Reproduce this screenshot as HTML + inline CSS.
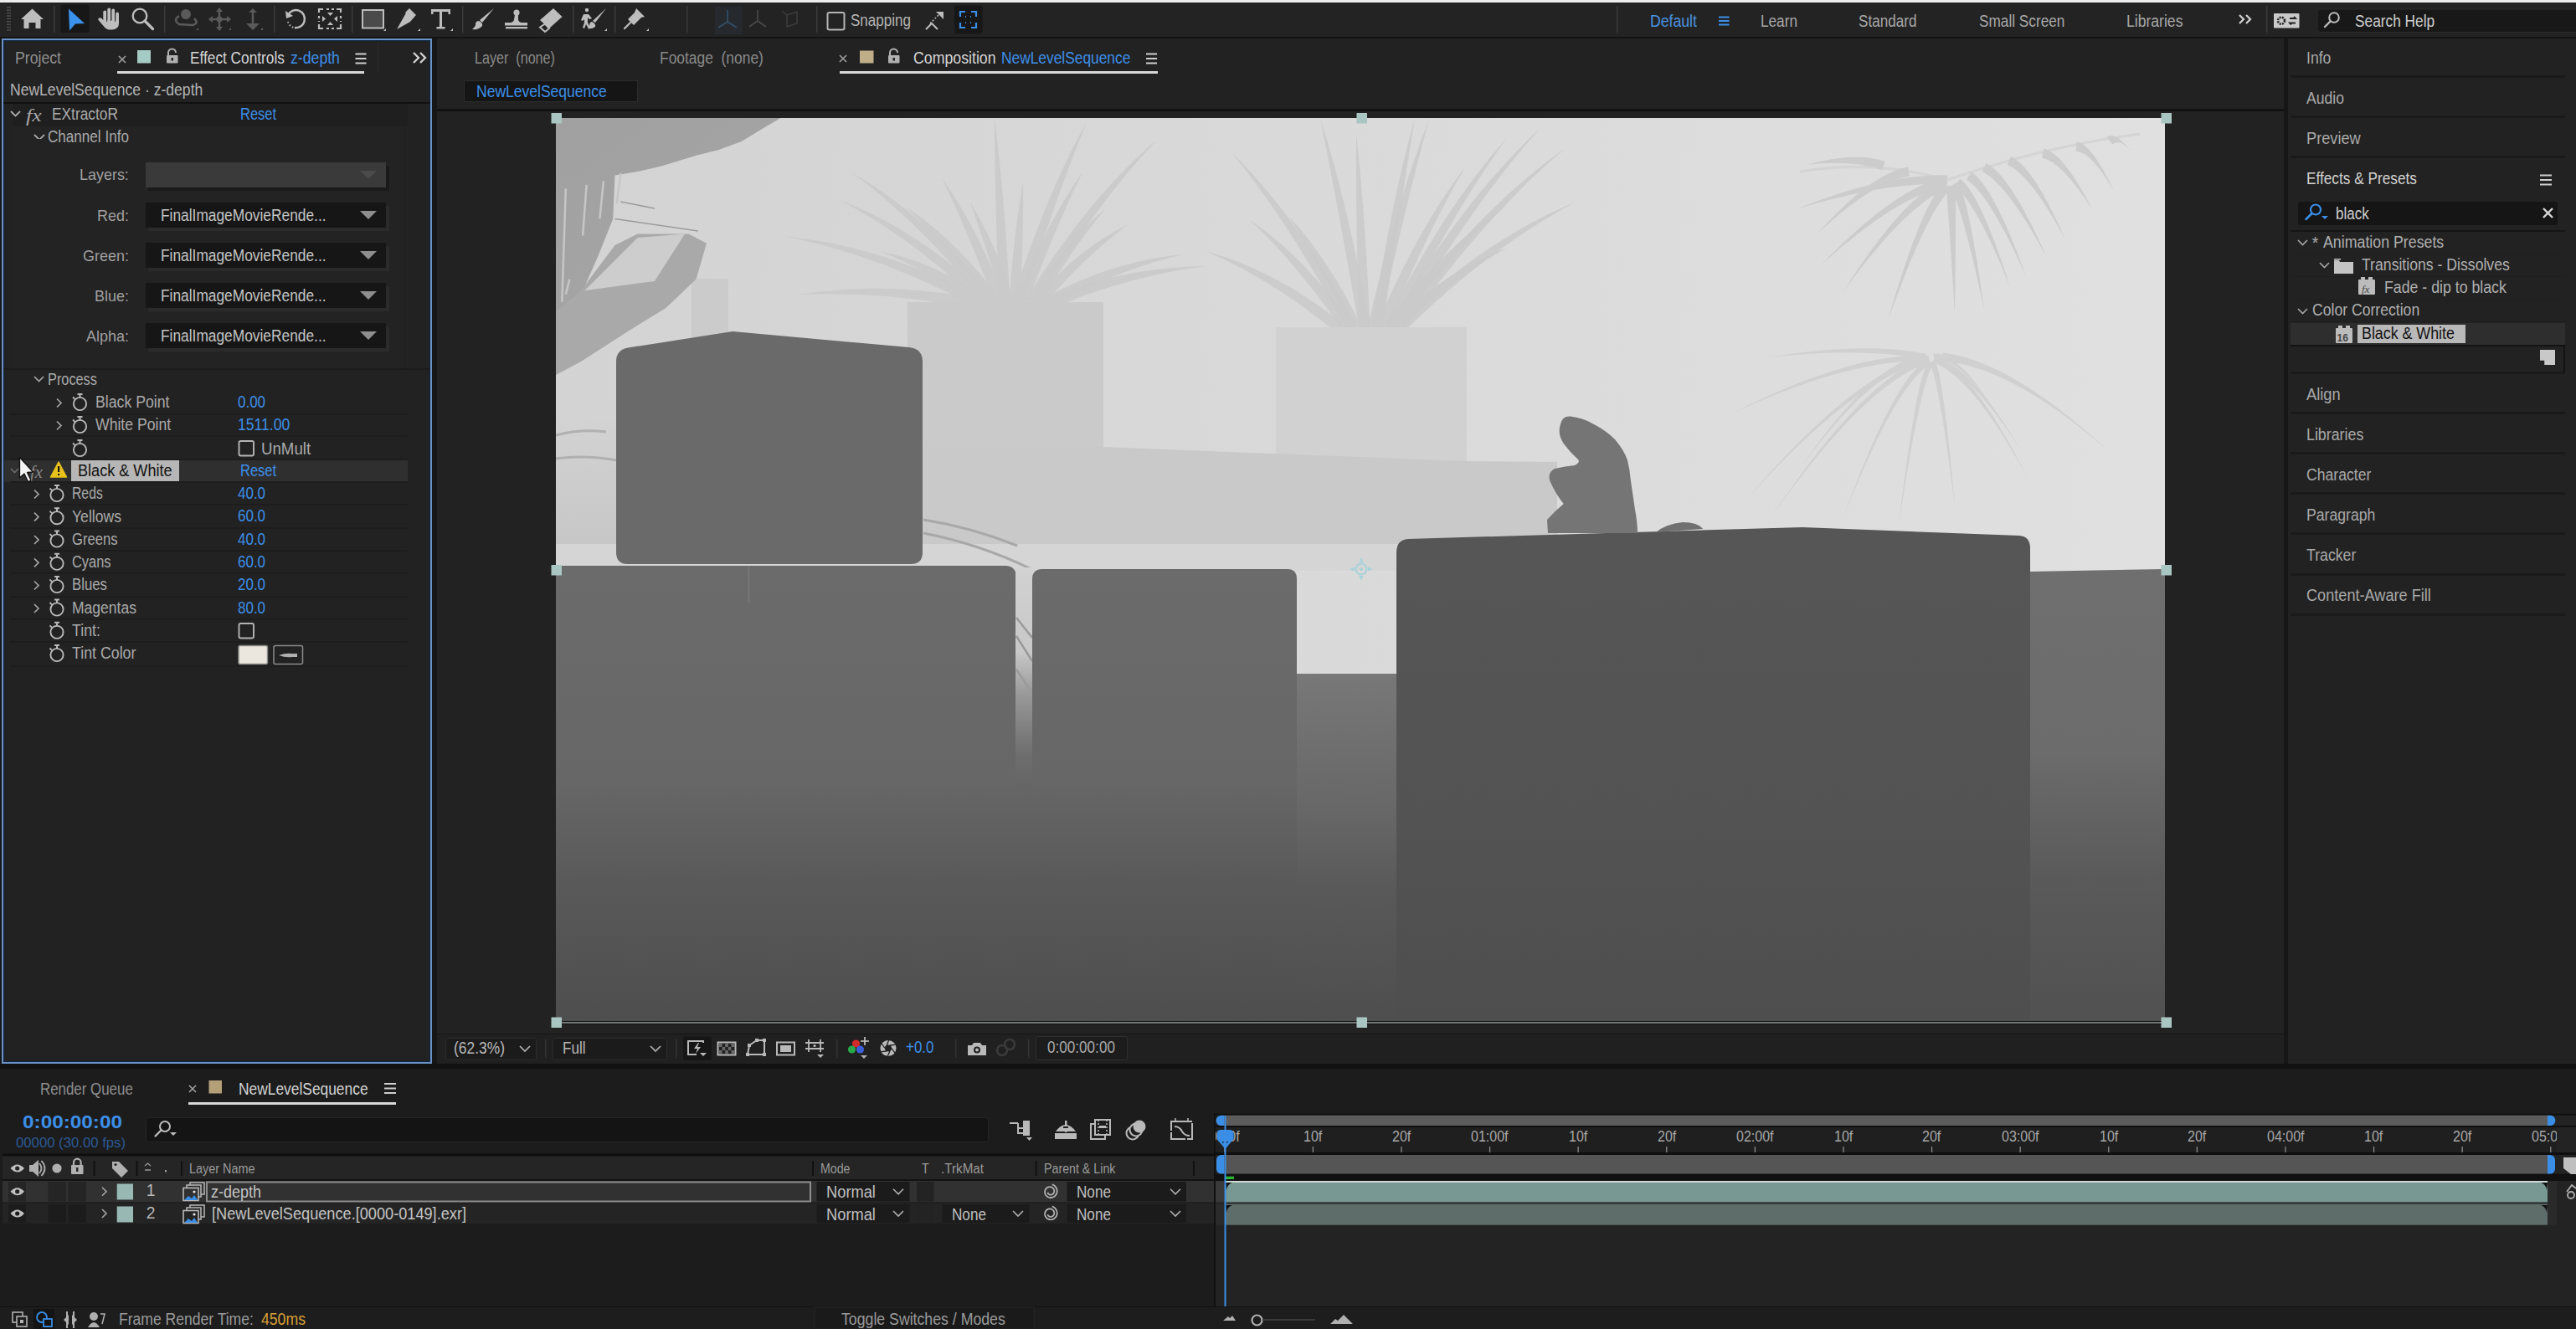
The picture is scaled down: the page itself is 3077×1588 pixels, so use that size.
<!DOCTYPE html>
<html><head><meta charset="utf-8">
<style>
*{margin:0;padding:0;box-sizing:border-box}
html,body{width:3077px;height:1588px;overflow:hidden;background:#121212;font-family:"Liberation Sans",sans-serif;color:#a8a8a8}
.a{position:absolute}
.t{position:absolute;white-space:nowrap;line-height:1}
svg{position:absolute;overflow:hidden}
</style></head><body>
<div class="a" style="left:0px;top:0px;width:3077px;height:3px;background:#ededed;"></div>
<div class="a" style="left:0px;top:3px;width:3077px;height:41px;background:#232323;"></div>
<div class="a" style="left:0px;top:44px;width:3077px;height:2px;background:#131313;"></div>
<svg style="left:0px;top:3px;" width="3077" height="41" viewBox="0 3 3077 41"><rect x="8" y="8.0" width="5" height="1.6" fill="#4a4a4a"/><rect x="8" y="11.4" width="5" height="1.6" fill="#4a4a4a"/><rect x="8" y="14.8" width="5" height="1.6" fill="#4a4a4a"/><rect x="8" y="18.2" width="5" height="1.6" fill="#4a4a4a"/><rect x="8" y="21.6" width="5" height="1.6" fill="#4a4a4a"/><rect x="8" y="25.0" width="5" height="1.6" fill="#4a4a4a"/><rect x="8" y="28.4" width="5" height="1.6" fill="#4a4a4a"/><rect x="8" y="31.8" width="5" height="1.6" fill="#4a4a4a"/><rect x="8" y="35.2" width="5" height="1.6" fill="#4a4a4a"/><rect x="64" y="7" width="1.5" height="32" fill="#3a3a3a"/><rect x="196" y="7" width="1.5" height="32" fill="#3a3a3a"/><rect x="327" y="7" width="1.5" height="32" fill="#3a3a3a"/><rect x="420" y="7" width="1.5" height="32" fill="#3a3a3a"/><rect x="552" y="7" width="1.5" height="32" fill="#3a3a3a"/><rect x="684" y="7" width="1.5" height="32" fill="#3a3a3a"/><rect x="734" y="7" width="1.5" height="32" fill="#3a3a3a"/><rect x="820" y="7" width="1.5" height="32" fill="#3a3a3a"/><rect x="975" y="7" width="1.5" height="32" fill="#3a3a3a"/><rect x="1931" y="7" width="1.5" height="32" fill="#3a3a3a"/><rect x="2707" y="7" width="1.5" height="32" fill="#3a3a3a"/><path d="M38.5,10.5 L52,23 L48.5,23 L48.5,34 L42.5,34 L42.5,27 L34.5,27 L34.5,34 L28.5,34 L28.5,23 L25,23 Z" fill="#bdbdbd"/><rect x="72.5" y="5.5" width="34" height="33.5" rx="3" fill="#171717"/><path d="M82,10.5 L101,28 L90,28.5 L83,36.5 Z" fill="#3a92ec"/><g fill="#bdbdbd"><rect x="123.3" y="12.5" width="4" height="15" rx="2"/><rect x="128.3" y="9.5" width="4" height="17" rx="2"/><rect x="133.3" y="10.5" width="4" height="16" rx="2"/><rect x="138.2" y="14.5" width="3.8" height="13" rx="1.9"/><path d="M123,24 h19 v4 q0,7 -8,7.5 h-3 q-4,0 -7,-4 l-6,-7 q-1.5,-2 0.5,-3 q1.5,-0.8 3,0.5z"/></g><path d="M127.6,14 v12 M132.6,11 v14 M137.5,12 v14" stroke="#232323" stroke-width="0.9"/><circle cx="167" cy="19" r="8.3" fill="none" stroke="#bdbdbd" stroke-width="2.3"/><path d="M173,25 L182.5,34.5" stroke="#bdbdbd" stroke-width="3.2" stroke-linecap="round"/><circle cx="222" cy="17" r="6" fill="#5a5a5a"/><path d="M214,19 Q206,24 214,29 L230,30 Q238,28 232,22" fill="none" stroke="#5a5a5a" stroke-width="2.5"/><path d="M234,36 l3,-3 v3z" fill="#5a5a5a"/><path d="M262,11 v24 M250,23 h25" stroke="#5a5a5a" stroke-width="2.5"/><path d="M262,9 l-4,5 h8z M262,37 l-4,-5 h8z M249,23 l5,-4 v8z M276,23 l-5,-4 v8z" fill="#5a5a5a"/><circle cx="262" cy="23" r="3.5" fill="#5a5a5a"/><path d="M273,36 l3,-3 v3z" fill="#5a5a5a"/><path d="M302,13 v18" stroke="#5a5a5a" stroke-width="2.5"/><path d="M302,10 l-5,5 h10z M294,28 h16 l-8,8z" fill="#5a5a5a"/><path d="M311,36 l3,-3 v3z" fill="#5a5a5a"/><path d="M344,18 A10.5,10.5 0 1 1 352,33" fill="none" stroke="#bdbdbd" stroke-width="2.4" stroke-dasharray="40 0"/><path d="M341,13 L342,22 L350,19 Z" fill="#bdbdbd"/><path d="M344,26 A10.5,10.5 0 0 0 354,33.5" fill="none" stroke="#bdbdbd" stroke-width="2" stroke-dasharray="1.5 2.5"/><path d="M381,15 v-4 h5 M402,11 h5 v4 M407,29 v5 h-5 M386,34 h-5 v-5" fill="none" stroke="#bdbdbd" stroke-width="2.2"/><path d="M390,11 h9 M390,34 h9 M381,19 v7 M407,19 v7" stroke="#bdbdbd" stroke-width="2.2" stroke-dasharray="3 3"/><path d="M391,15 h7 l-3.5,4z M391,30 h7 l-3.5,-4z M385,19 v7 l4,-3.5z M403,19 v7 l-4,-3.5z" fill="#bdbdbd"/><rect x="433" y="12" width="25" height="21.5" fill="#4a4a4a" stroke="#bdbdbd" stroke-width="2"/><path d="M458,37 l3,-3 v3z" fill="#bdbdbd"/><path d="M487,12 L495,20 L490,26 L474,35 L483,19 Z" fill="#bdbdbd"/><path d="M484,15 L489,10 L497,18 L492,23 Z" fill="#bdbdbd"/><path d="M499,37 l3,-3 v3z" fill="#bdbdbd"/><path d="M515,11 h23 v6 h-2.5 v-3 h-7.5 v18 h3.5 v2.5 h-10 v-2.5 h3.5 v-18 h-7.5 v3 h-2.5z" fill="#bdbdbd"/><path d="M538,37 l3,-3 v3z" fill="#bdbdbd"/><path d="M590,10 L576,27 L573,24 Z" fill="#bdbdbd"/><path d="M572,25 Q577,27 576,31 Q572,36 564,35 Q569,31 568,28 Q569,25 572,25Z" fill="#bdbdbd"/><circle cx="617" cy="15" r="3.6" fill="#bdbdbd"/><path d="M615,18 h4 v5 q0,3 4,4 h7 v3.5 h-27 v-3.5 h7 q4,-1 4,-4z" fill="#bdbdbd"/><rect x="604" y="32" width="26" height="2.3" fill="#bdbdbd"/><path d="M661,10 L671.5,20 L656,34 L645,24 Z" fill="#bdbdbd"/><path d="M651,28.5 L656,34 L651,38 L645,32.5 Z" fill="none" stroke="#bdbdbd" stroke-width="2"/><circle cx="701" cy="12" r="2.2" fill="#bdbdbd"/><path d="M697,17 l6,0 l4,5 l-3,1 l-2,-2 l0,6 l3,6 l-2,1 l-3,-5 l-2,5 l-2,-1 l2,-6 v-4 l-2,2 l-2,-1z" fill="#bdbdbd"/><path d="M724,10 L711,27 L708,25 Z" fill="#bdbdbd"/><path d="M707,26 Q712,28 711,32 Q707,35 702,34 Q705,31 704,29 Q705,26 707,26Z" fill="#bdbdbd"/><path d="M722,37 l3,-3 v3z" fill="#bdbdbd"/><path d="M760,10 L770,20 L766,21 L760,27 L757,30 L750,23 L753,20 L758,15 Z" fill="#bdbdbd"/><path d="M753,27 L746,34" stroke="#bdbdbd" stroke-width="2.3" stroke-linecap="round"/><path d="M772,37 l3,-3 v3z" fill="#bdbdbd"/><rect x="854" y="8" width="32.5" height="33" fill="#262a2e"/><path d="M869,12 v14 l-11,7 M869,26 l11,7" fill="none" stroke="#34506a" stroke-width="1.6"/><path d="M905,12 v13 l-10,7 M905,25 l10,7" fill="none" stroke="#4a4a4a" stroke-width="1.6"/><path d="M940,18 l12,-4 v14 l-12,4z M934,13 l6,5" fill="none" stroke="#3c3c3c" stroke-width="1.6"/><rect x="988.5" y="15" width="20" height="20.5" rx="2" fill="none" stroke="#b5b5b5" stroke-width="2"/><path d="M1106,35 l7,-7 l7,7" fill="none" stroke="#bdbdbd" stroke-width="2"/><path d="M1111,28 l11,-11" stroke="#bdbdbd" stroke-width="1.5" stroke-dasharray="2 2"/><path d="M1127,14 v9 l-9,-9z" fill="#bdbdbd"/><rect x="1140" y="6.5" width="33.5" height="34" rx="3" fill="#171717"/><path d="M1147,20 v-6 h6 M1160,14 h6 v6 M1166,27 v6 h-6 M1153,33 h-6 v-6" fill="none" stroke="#3a8ee6" stroke-width="2.2"/><path d="M1153,20 h1 M1159,20 h1 M1153,27 h1 M1159,27 h1" stroke="#3a8ee6" stroke-width="2"/><path d="M2053,20.5 h12.5 M2053,25 h12.5 M2053,29.5 h12.5" stroke="#3d8fe8" stroke-width="2"/><path d="M2675,18 l5,5 l-5,5 M2683,18 l5,5 l-5,5" fill="none" stroke="#cfcfcf" stroke-width="2.3"/><rect x="2716" y="16" width="30.5" height="17.5" rx="1" fill="#c9c9c9"/><circle cx="2725" cy="24.7" r="4" fill="none" stroke="#232323" stroke-width="2.6" stroke-dasharray="2 1.2"/><path d="M2735,22 h7 l-2,-2 M2742,27.5 h-7 l2,2" fill="none" stroke="#232323" stroke-width="1.8"/><rect x="2768" y="11" width="320" height="27.5" rx="3" fill="#181818" stroke="#2c2c2c" stroke-width="1"/><circle cx="2788" cy="21" r="5.8" fill="none" stroke="#bdbdbd" stroke-width="2"/><path d="M2783.5,25.5 L2777,32" stroke="#bdbdbd" stroke-width="2.4" stroke-linecap="round"/></svg>
<div class="t" style="left:1016px;top:15.46px;font-size:19.3px;color:#b3b3b3;transform:scaleX(0.8827);transform-origin:0 0;">Snapping</div>
<div class="t" style="left:1971px;top:16.46px;font-size:19.3px;color:#4a93e0;transform:scaleX(0.9157);transform-origin:0 0;">Default</div>
<div class="t" style="left:2103px;top:16.46px;font-size:19.3px;color:#a8a8a8;transform:scaleX(0.8913);transform-origin:0 0;">Learn</div>
<div class="t" style="left:2220px;top:16.46px;font-size:19.3px;color:#a8a8a8;transform:scaleX(0.8872);transform-origin:0 0;">Standard</div>
<div class="t" style="left:2363.5px;top:16.46px;font-size:19.3px;color:#a8a8a8;transform:scaleX(0.8930);transform-origin:0 0;">Small Screen</div>
<div class="t" style="left:2540px;top:16.46px;font-size:19.3px;color:#a8a8a8;transform:scaleX(0.9119);transform-origin:0 0;">Libraries</div>
<div class="t" style="left:2812.5px;top:15.96px;font-size:19.3px;color:#cfcfcf;transform:scaleX(0.8963);transform-origin:0 0;">Search Help</div>
<div class="a" style="left:0px;top:46px;width:522px;height:1231px;background:#161616;"></div>
<div class="a" style="left:2px;top:46px;width:514px;height:1225px;background:#222222;border:2px solid #6a92c4;box-shadow:inset 0 0 1px 1px #0e2747;"></div>
<div class="t" style="left:18px;top:60.46px;font-size:19.3px;color:#8f8f8f;transform:scaleX(0.9156);transform-origin:0 0;">Project</div>
<div class="a" style="left:4px;top:122px;width:510px;height:2px;background:#111111;"></div>
<div class="a" style="left:16px;top:124px;width:471px;height:27px;background:#1f1f1f;"></div>
<div class="a" style="left:16px;top:151px;width:471px;height:290px;background:#232323;"></div>
<div class="a" style="left:483px;top:151px;width:1px;height:290px;background:#1e1e1e;"></div>
<svg style="left:0px;top:46px;" width="522" height="120" viewBox="0 46 522 120"><path d="M142,67 l8,8 M150,67 l-8,8" stroke="#a0a0a0" stroke-width="1.6"/><rect x="164" y="60" width="16" height="15.5" fill="#a6cbc4"/><path d="M201,66 v-3 a4.5,4.5 0 0 1 9,0" fill="none" stroke="#b0b0b0" stroke-width="2"/><rect x="199" y="66" width="13.5" height="9.5" rx="1" fill="#b0b0b0"/><rect x="204.5" y="69" width="2.5" height="3.5" fill="#232323"/><path d="M424.5,64.5 h13 M424.5,70 h13 M424.5,75.5 h13" stroke="#cfcfcf" stroke-width="2"/><path d="M494,63 l6,6 l-6,6 M502,63 l6,6 l-6,6" fill="none" stroke="#d0d0d0" stroke-width="2.4"/><path d="M13,133 l5.5,5.5 l5.5,-5.5" fill="none" stroke="#a9a9a9" stroke-width="1.8"/><path d="M41,161 l6,6 l6,-6" fill="none" stroke="#a9a9a9" stroke-width="1.8"/></svg>
<div class="t" style="left:227px;top:60.46px;font-size:19.3px;color:#d6d6d6;transform:scaleX(0.8952);transform-origin:0 0;">Effect Controls</div>
<div class="t" style="left:347px;top:60.46px;font-size:19.3px;color:#3d8fe8;transform:scaleX(0.9165);transform-origin:0 0;">z-depth</div>
<div class="a" style="left:140px;top:85px;width:295px;height:3px;background:#d8d8d8;"></div>
<div class="a" style="left:451px;top:50px;width:1px;height:35px;background:#2c2c2c;"></div>
<div class="t" style="left:12px;top:98.46px;font-size:19.3px;color:#b4b4b4;transform:scaleX(0.9103);transform-origin:0 0;">NewLevelSequence · z-depth</div>
<div class="t" style="left:31px;top:128.02px;font-size:21px;color:#a8a8a8;transform:scaleX(1.2244);transform-origin:0 0;font-family:'Liberation Serif',serif;font-style:italic;">fx</div>
<div class="t" style="left:62px;top:127.46px;font-size:19.3px;color:#aaaaaa;transform:scaleX(0.8982);transform-origin:0 0;">EXtractoR</div>
<div class="t" style="left:287px;top:127.46px;font-size:19.3px;color:#3d8fe8;transform:scaleX(0.8529);transform-origin:0 0;">Reset</div>
<div class="t" style="left:57px;top:154.46px;font-size:19.3px;color:#aaaaaa;transform:scaleX(0.8862);transform-origin:0 0;">Channel Info</div>
<div class="t" style="left:94.63849812499998px;top:200.44px;font-size:18.5px;color:#a0a0a0;transform:scaleX(0.9702);transform-origin:0 0;">Layers:</div>
<div class="a" style="left:177px;top:198px;width:288px;height:30px;background:#1a1a1a;"></div>
<div class="a" style="left:173.5px;top:194px;width:287.5px;height:30px;background:#3a3a3a;"></div>
<svg style="left:429px;top:203px;" width="22" height="12" viewBox="429 203 22 12"><path d="M430,204 h20 l-10,10z" fill="#4a4a4a"/></svg>
<div class="t" style="left:115.58554203125px;top:248.74px;font-size:18.5px;color:#a0a0a0;transform:scaleX(0.9702);transform-origin:0 0;">Red:</div>
<div class="a" style="left:177px;top:246px;width:288px;height:30px;background:#2b2b2b;"></div>
<div class="a" style="left:173.5px;top:242px;width:287.5px;height:30px;background:#161616;"></div>
<div class="t" style="left:192px;top:248.26px;font-size:19.3px;color:#c4c4c4;transform:scaleX(0.8990);transform-origin:0 0;">FinalImageMovieRende...</div>
<svg style="left:429px;top:251px;" width="22" height="12" viewBox="429 251 22 12"><path d="M430,252 h20 l-10,10z" fill="#8e8e8e"/></svg>
<div class="t" style="left:98.6265415625px;top:296.94px;font-size:18.5px;color:#a0a0a0;transform:scaleX(0.9702);transform-origin:0 0;">Green:</div>
<div class="a" style="left:177px;top:294px;width:288px;height:30px;background:#2b2b2b;"></div>
<div class="a" style="left:173.5px;top:290px;width:287.5px;height:30px;background:#161616;"></div>
<div class="t" style="left:192px;top:296.46px;font-size:19.3px;color:#c4c4c4;transform:scaleX(0.8990);transform-origin:0 0;">FinalImageMovieRende...</div>
<svg style="left:429px;top:299px;" width="22" height="12" viewBox="429 299 22 12"><path d="M430,300 h20 l-10,10z" fill="#8e8e8e"/></svg>
<div class="t" style="left:112.587498125px;top:344.94px;font-size:18.5px;color:#a0a0a0;transform:scaleX(0.9702);transform-origin:0 0;">Blue:</div>
<div class="a" style="left:177px;top:342px;width:288px;height:30px;background:#2b2b2b;"></div>
<div class="a" style="left:173.5px;top:338px;width:287.5px;height:30px;background:#161616;"></div>
<div class="t" style="left:192px;top:344.46px;font-size:19.3px;color:#c4c4c4;transform:scaleX(0.8990);transform-origin:0 0;">FinalImageMovieRende...</div>
<svg style="left:429px;top:347px;" width="22" height="12" viewBox="429 347 22 12"><path d="M430,348 h20 l-10,10z" fill="#8e8e8e"/></svg>
<div class="t" style="left:102.604769140625px;top:392.94px;font-size:18.5px;color:#a0a0a0;transform:scaleX(0.9702);transform-origin:0 0;">Alpha:</div>
<div class="a" style="left:177px;top:390px;width:288px;height:30px;background:#2b2b2b;"></div>
<div class="a" style="left:173.5px;top:386px;width:287.5px;height:30px;background:#161616;"></div>
<div class="t" style="left:192px;top:392.46px;font-size:19.3px;color:#c4c4c4;transform:scaleX(0.8990);transform-origin:0 0;">FinalImageMovieRende...</div>
<svg style="left:429px;top:395px;" width="22" height="12" viewBox="429 395 22 12"><path d="M430,396 h20 l-10,10z" fill="#8e8e8e"/></svg>
<div class="a" style="left:4px;top:440px;width:510px;height:2px;background:#1c1c1c;"></div>
<div class="t" style="left:57px;top:443.76px;font-size:19.3px;color:#aaaaaa;transform:scaleX(0.8462);transform-origin:0 0;">Process</div>
<div class="a" style="left:12px;top:494px;width:475px;height:2px;background:#1d1d1d;"></div>
<div class="t" style="left:113.8px;top:471.46px;font-size:19.3px;color:#aaaaaa;transform:scaleX(0.9177);transform-origin:0 0;">Black Point</div>
<div class="t" style="left:284.4px;top:471.26px;font-size:19.3px;color:#3d8fe8;transform:scaleX(0.8812);transform-origin:0 0;">0.00</div>
<div class="a" style="left:12px;top:520px;width:475px;height:2px;background:#1d1d1d;"></div>
<div class="t" style="left:113.8px;top:498.46px;font-size:19.3px;color:#aaaaaa;transform:scaleX(0.9140);transform-origin:0 0;">White Point</div>
<div class="t" style="left:284.4px;top:498.26px;font-size:19.3px;color:#3d8fe8;transform:scaleX(0.9117);transform-origin:0 0;">1511.00</div>
<div class="a" style="left:12px;top:548px;width:475px;height:2px;background:#1d1d1d;"></div>
<div class="t" style="left:311.5px;top:526.96px;font-size:19.3px;color:#aaaaaa;transform:scaleX(0.9684);transform-origin:0 0;">UnMult</div>
<div class="a" style="left:5px;top:549.5px;width:482px;height:26.5px;background:#2f2f2f;"></div>
<div class="a" style="left:85px;top:549.5px;width:129px;height:25.5px;background:#b6b6b6;"></div>
<div class="t" style="left:92.7px;top:552.76px;font-size:19.3px;color:#121212;transform:scaleX(0.9382);transform-origin:0 0;">Black &amp; White</div>
<div class="t" style="left:287px;top:553.46px;font-size:19.3px;color:#3d8fe8;transform:scaleX(0.8529);transform-origin:0 0;">Reset</div>
<div class="t" style="left:36px;top:553.87px;font-size:20px;color:#8a8a8a;transform:scaleX(1.0157);transform-origin:0 0;font-family:'Liberation Serif',serif;font-style:italic;">fx</div>
<div class="a" style="left:12px;top:575px;width:475px;height:2px;background:#1d1d1d;"></div>
<div class="t" style="left:284.4px;top:580.26px;font-size:19.3px;color:#3d8fe8;transform:scaleX(0.8812);transform-origin:0 0;">40.0</div>
<div class="t" style="left:86px;top:580.46px;font-size:19.3px;color:#aaaaaa;transform:scaleX(0.8168);transform-origin:0 0;">Reds</div>
<div class="a" style="left:12px;top:602px;width:475px;height:2px;background:#1d1d1d;"></div>
<div class="t" style="left:284.4px;top:607.46px;font-size:19.3px;color:#3d8fe8;transform:scaleX(0.8812);transform-origin:0 0;">60.0</div>
<div class="t" style="left:86px;top:607.66px;font-size:19.3px;color:#aaaaaa;transform:scaleX(0.9114);transform-origin:0 0;">Yellows</div>
<div class="a" style="left:12px;top:630px;width:475px;height:2px;background:#1d1d1d;"></div>
<div class="t" style="left:284.4px;top:634.76px;font-size:19.3px;color:#3d8fe8;transform:scaleX(0.8812);transform-origin:0 0;">40.0</div>
<div class="t" style="left:86px;top:634.96px;font-size:19.3px;color:#aaaaaa;transform:scaleX(0.8611);transform-origin:0 0;">Greens</div>
<div class="a" style="left:12px;top:657px;width:475px;height:2px;background:#1d1d1d;"></div>
<div class="t" style="left:284.4px;top:662.06px;font-size:19.3px;color:#3d8fe8;transform:scaleX(0.8812);transform-origin:0 0;">60.0</div>
<div class="t" style="left:86px;top:662.26px;font-size:19.3px;color:#aaaaaa;transform:scaleX(0.8500);transform-origin:0 0;">Cyans</div>
<div class="a" style="left:12px;top:684px;width:475px;height:2px;background:#1d1d1d;"></div>
<div class="t" style="left:284.4px;top:689.26px;font-size:19.3px;color:#3d8fe8;transform:scaleX(0.8812);transform-origin:0 0;">20.0</div>
<div class="t" style="left:86px;top:689.46px;font-size:19.3px;color:#aaaaaa;transform:scaleX(0.8699);transform-origin:0 0;">Blues</div>
<div class="a" style="left:12px;top:712px;width:475px;height:2px;background:#1d1d1d;"></div>
<div class="t" style="left:284.4px;top:716.76px;font-size:19.3px;color:#3d8fe8;transform:scaleX(0.8812);transform-origin:0 0;">80.0</div>
<div class="t" style="left:86px;top:716.96px;font-size:19.3px;color:#aaaaaa;transform:scaleX(0.9084);transform-origin:0 0;">Magentas</div>
<div class="a" style="left:12px;top:739px;width:475px;height:2px;background:#1d1d1d;"></div>
<div class="t" style="left:86px;top:744.26px;font-size:19.3px;color:#aaaaaa;transform:scaleX(0.9234);transform-origin:0 0;">Tint:</div>
<div class="a" style="left:12px;top:766px;width:475px;height:2px;background:#1d1d1d;"></div>
<div class="t" style="left:86px;top:771.46px;font-size:19.3px;color:#aaaaaa;transform:scaleX(0.9223);transform-origin:0 0;">Tint Color</div>
<div class="a" style="left:12px;top:795px;width:475px;height:2px;background:#1d1d1d;"></div>
<svg style="left:0px;top:430px;" width="522" height="380" viewBox="0 430 522 380"><path d="M41,450 l5.5,5.5 l5.5,-5.5" fill="none" stroke="#a5a5a5" stroke-width="1.7"/><circle cx="95.5" cy="482.5" r="7.6" fill="none" stroke="#b9b9b9" stroke-width="1.9"/><rect x="92.5" y="470.0" width="6" height="2" fill="#b9b9b9"/><rect x="94.5" y="471.5" width="2" height="3.5" fill="#b9b9b9"/><path d="M87.0,474.5 l2.6,2.6" stroke="#b9b9b9" stroke-width="1.8"/><path d="M68,476.5 l5,5 l-5,5" fill="none" stroke="#a5a5a5" stroke-width="1.7"/><circle cx="95.5" cy="509.5" r="7.6" fill="none" stroke="#b9b9b9" stroke-width="1.9"/><rect x="92.5" y="497.0" width="6" height="2" fill="#b9b9b9"/><rect x="94.5" y="498.5" width="2" height="3.5" fill="#b9b9b9"/><path d="M87.0,501.5 l2.6,2.6" stroke="#b9b9b9" stroke-width="1.8"/><path d="M68,503.5 l5,5 l-5,5" fill="none" stroke="#a5a5a5" stroke-width="1.7"/><circle cx="95.5" cy="537.5" r="7.6" fill="none" stroke="#b9b9b9" stroke-width="1.9"/><rect x="92.5" y="525.0" width="6" height="2" fill="#b9b9b9"/><rect x="94.5" y="526.5" width="2" height="3.5" fill="#b9b9b9"/><path d="M87.0,529.5 l2.6,2.6" stroke="#b9b9b9" stroke-width="1.8"/><rect x="285.5" y="527" width="17.5" height="17.5" rx="2" fill="none" stroke="#b5b5b5" stroke-width="1.9"/><path d="M13,560 l4.5,4.5 l4.5,-4.5" fill="none" stroke="#6a6a6a" stroke-width="1.7"/><path d="M70,552 L79.5,570 L60.5,570 Z" fill="#e8c21a" stroke="#e8c21a" stroke-width="1.5" stroke-linejoin="round"/><rect x="69" y="557" width="2.2" height="7" fill="#1a1a1a"/><rect x="69" y="566" width="2.2" height="2" fill="#1a1a1a"/><circle cx="68" cy="591.5" r="7.6" fill="none" stroke="#b9b9b9" stroke-width="1.9"/><rect x="65" y="579.0" width="6" height="2" fill="#b9b9b9"/><rect x="67" y="580.5" width="2" height="3.5" fill="#b9b9b9"/><path d="M59.5,583.5 l2.6,2.6" stroke="#b9b9b9" stroke-width="1.8"/><path d="M41,585.5 l5,5 l-5,5" fill="none" stroke="#a5a5a5" stroke-width="1.7"/><circle cx="68" cy="618.7" r="7.6" fill="none" stroke="#b9b9b9" stroke-width="1.9"/><rect x="65" y="606.2" width="6" height="2" fill="#b9b9b9"/><rect x="67" y="607.7" width="2" height="3.5" fill="#b9b9b9"/><path d="M59.5,610.7 l2.6,2.6" stroke="#b9b9b9" stroke-width="1.8"/><path d="M41,612.7 l5,5 l-5,5" fill="none" stroke="#a5a5a5" stroke-width="1.7"/><circle cx="68" cy="646" r="7.6" fill="none" stroke="#b9b9b9" stroke-width="1.9"/><rect x="65" y="633.5" width="6" height="2" fill="#b9b9b9"/><rect x="67" y="635" width="2" height="3.5" fill="#b9b9b9"/><path d="M59.5,638 l2.6,2.6" stroke="#b9b9b9" stroke-width="1.8"/><path d="M41,640 l5,5 l-5,5" fill="none" stroke="#a5a5a5" stroke-width="1.7"/><circle cx="68" cy="673.3" r="7.6" fill="none" stroke="#b9b9b9" stroke-width="1.9"/><rect x="65" y="660.8" width="6" height="2" fill="#b9b9b9"/><rect x="67" y="662.3" width="2" height="3.5" fill="#b9b9b9"/><path d="M59.5,665.3 l2.6,2.6" stroke="#b9b9b9" stroke-width="1.8"/><path d="M41,667.3 l5,5 l-5,5" fill="none" stroke="#a5a5a5" stroke-width="1.7"/><circle cx="68" cy="700.5" r="7.6" fill="none" stroke="#b9b9b9" stroke-width="1.9"/><rect x="65" y="688.0" width="6" height="2" fill="#b9b9b9"/><rect x="67" y="689.5" width="2" height="3.5" fill="#b9b9b9"/><path d="M59.5,692.5 l2.6,2.6" stroke="#b9b9b9" stroke-width="1.8"/><path d="M41,694.5 l5,5 l-5,5" fill="none" stroke="#a5a5a5" stroke-width="1.7"/><circle cx="68" cy="728" r="7.6" fill="none" stroke="#b9b9b9" stroke-width="1.9"/><rect x="65" y="715.5" width="6" height="2" fill="#b9b9b9"/><rect x="67" y="717" width="2" height="3.5" fill="#b9b9b9"/><path d="M59.5,720 l2.6,2.6" stroke="#b9b9b9" stroke-width="1.8"/><path d="M41,722 l5,5 l-5,5" fill="none" stroke="#a5a5a5" stroke-width="1.7"/><circle cx="68" cy="755.3" r="7.6" fill="none" stroke="#b9b9b9" stroke-width="1.9"/><rect x="65" y="742.8" width="6" height="2" fill="#b9b9b9"/><rect x="67" y="744.3" width="2" height="3.5" fill="#b9b9b9"/><path d="M59.5,747.3 l2.6,2.6" stroke="#b9b9b9" stroke-width="1.8"/><circle cx="68" cy="782.5" r="7.6" fill="none" stroke="#b9b9b9" stroke-width="1.9"/><rect x="65" y="770.0" width="6" height="2" fill="#b9b9b9"/><rect x="67" y="771.5" width="2" height="3.5" fill="#b9b9b9"/><path d="M59.5,774.5 l2.6,2.6" stroke="#b9b9b9" stroke-width="1.8"/><rect x="285.5" y="745" width="17.5" height="17.5" rx="2" fill="none" stroke="#b5b5b5" stroke-width="1.9"/><rect x="285" y="771.5" width="34.5" height="22" rx="2" fill="#ebe7de" stroke="#8a8a8a" stroke-width="1.5"/><rect x="327" y="771.5" width="34.5" height="22" rx="2" fill="none" stroke="#8a8a8a" stroke-width="1.5"/><path d="M333,783 q8,-3 16,-2 h6 v4 h-6 q-8,1 -16,-2z" fill="#b0b0b0"/><path d="M23.5,546.5 L23.5,571 L29,566 L33.5,575.5 L37,574 L32.5,564.5 L39.5,564 Z" fill="#f4f4f4" stroke="#101010" stroke-width="1.3" stroke-linejoin="round"/></svg>
<div class="a" style="left:522px;top:46px;width:2206px;height:1225px;background:#222222;"></div>
<div class="t" style="left:567px;top:60.46px;font-size:19.3px;color:#8a8a8a;transform:scaleX(0.8363);transform-origin:0 0;">Layer  (none)</div>
<div class="t" style="left:788px;top:60.46px;font-size:19.3px;color:#8a8a8a;transform:scaleX(0.9029);transform-origin:0 0;">Footage  (none)</div>
<svg style="left:990px;top:55px;" width="400" height="30" viewBox="990 55 400 30"><path d="M1003,66 l8,8 M1011,66 l-8,8" stroke="#a0a0a0" stroke-width="1.6"/><rect x="1027" y="60.5" width="16.5" height="15" fill="#bfae88"/><path d="M1063,66 v-3 a4.5,4.5 0 0 1 9,0" fill="none" stroke="#b0b0b0" stroke-width="2"/><rect x="1061" y="66" width="13.5" height="9.5" rx="1" fill="#b0b0b0"/><rect x="1066.5" y="69" width="2.5" height="3.5" fill="#222"/><path d="M1369,64.5 h13 M1369,70 h13 M1369,75.5 h13" stroke="#cfcfcf" stroke-width="2"/></svg>
<div class="t" style="left:1090.6px;top:60.46px;font-size:19.3px;color:#d6d6d6;transform:scaleX(0.9201);transform-origin:0 0;">Composition</div>
<div class="t" style="left:1196px;top:60.46px;font-size:19.3px;color:#3d8fe8;transform:scaleX(0.8999);transform-origin:0 0;">NewLevelSequence</div>
<div class="a" style="left:1003px;top:85px;width:380px;height:3px;background:#d8d8d8;"></div>
<div class="a" style="left:554px;top:96px;width:208px;height:26px;background:#151515;border:1px solid #2c2c2c;"></div>
<div class="t" style="left:569px;top:100.46px;font-size:19.3px;color:#3d8fe8;transform:scaleX(0.9087);transform-origin:0 0;">NewLevelSequence</div>
<div class="a" style="left:522px;top:130px;width:2206px;height:3px;background:#121212;"></div>
<svg style="left:664px;top:141px" width="1922" height="1080" viewBox="664 141 1922 1080">
<defs>
<linearGradient id="bgg" gradientUnits="userSpaceOnUse" x1="664" y1="0" x2="2586" y2="0">
<stop offset="0" stop-color="#d3d3d3"/><stop offset="0.45" stop-color="#d9d9d9"/><stop offset="1" stop-color="#e0e0e0"/>
</linearGradient>
<linearGradient id="blk" gradientUnits="userSpaceOnUse" x1="0" y1="676" x2="0" y2="1221">
<stop offset="0" stop-color="#6b6b6b"/><stop offset="0.47" stop-color="#676767"/><stop offset="0.7" stop-color="#595959"/><stop offset="1" stop-color="#4e4e4e"/>
</linearGradient>
<linearGradient id="blkD" gradientUnits="userSpaceOnUse" x1="0" y1="630" x2="0" y2="1221">
<stop offset="0" stop-color="#565656"/><stop offset="0.6" stop-color="#535353"/><stop offset="1" stop-color="#4e4e4e"/>
</linearGradient>
<linearGradient id="flr" gradientUnits="userSpaceOnUse" x1="0" y1="680" x2="0" y2="1221">
<stop offset="0" stop-color="#6f6f6f"/><stop offset="0.4" stop-color="#6c6c6c"/><stop offset="0.68" stop-color="#5a5a5a"/><stop offset="1" stop-color="#515151"/>
</linearGradient>
<linearGradient id="flr2" gradientUnits="userSpaceOnUse" x1="0" y1="805" x2="0" y2="1221">
<stop offset="0" stop-color="#787878"/><stop offset="0.23" stop-color="#6e6e6e"/><stop offset="0.38" stop-color="#686868"/><stop offset="0.62" stop-color="#595959"/><stop offset="1" stop-color="#4e4e4e"/>
</linearGradient>
<linearGradient id="gapg" gradientUnits="userSpaceOnUse" x1="0" y1="676" x2="0" y2="940">
<stop offset="0" stop-color="#d2d2d2"/><stop offset="0.39" stop-color="#c8c8c8"/><stop offset="0.58" stop-color="#999999"/><stop offset="0.85" stop-color="#6e6e6e"/><stop offset="1" stop-color="#656565"/>
</linearGradient>
<linearGradient id="lfg" gradientUnits="userSpaceOnUse" x1="664" y1="141" x2="900" y2="450">
<stop offset="0" stop-color="#a0a0a0"/><stop offset="1" stop-color="#a8a8a8"/>
</linearGradient>
<linearGradient id="fade" gradientUnits="userSpaceOnUse" x1="0" y1="850" x2="0" y2="1000">
<stop offset="0" stop-color="#646464" stop-opacity="0"/><stop offset="1" stop-color="#5e5e5e" stop-opacity="0.9"/>
</linearGradient>
<linearGradient id="lsh" gradientUnits="userSpaceOnUse" x1="0" y1="500" x2="0" y2="650">
<stop offset="0" stop-color="#d3d3d3"/><stop offset="0.45" stop-color="#cdcdcd"/><stop offset="1" stop-color="#c7c7c7"/>
</linearGradient>
</defs>
<rect x="664" y="141" width="1922" height="1080" fill="url(#bgg)"/>
<path d="M2150,205 Q2240,190 2326,215 Q2440,175 2556,160" fill="none" stroke="#d4d4d4" stroke-width="3"/>
<path d="M2326.2,209.5 Q2253.8,206.8 2145.0,250.0 Q2253.4,216.7 2325.8,220.5 Z" fill="#cccccc" opacity="1"/>
<path d="M2320.8,212.6 Q2262.2,225.9 2175.0,317.0 Q2264.2,235.6 2323.2,223.4 Z" fill="#cccccc" opacity="1"/>
<path d="M2321.9,214.9 Q2273.3,235.4 2202.0,348.0 Q2277.1,244.6 2326.1,225.1 Z" fill="#cccccc" opacity="1"/>
<path d="M2322.1,218.1 Q2294.1,246.7 2255.0,383.0 Q2301.1,253.8 2329.9,225.9 Z" fill="#cccccc" opacity="1"/>
<path d="M2324.5,222.4 Q2327.1,248.4 2335.0,374.0 Q2336.9,247.6 2335.5,221.6 Z" fill="#cccccc" opacity="1"/>
<path d="M2329.2,222.7 Q2344.1,247.9 2370.0,370.0 Q2352.7,243.1 2338.8,217.3 Z" fill="#cccccc" opacity="1"/>
<path d="M2334.7,222.4 Q2360.2,241.2 2401.0,343.0 Q2366.2,233.3 2341.3,213.6 Z" fill="#cccccc" opacity="1"/>
<path d="M2367.5,204.9 Q2397.8,219.4 2445.0,308.0 Q2402.2,210.6 2372.5,195.1 Z" fill="#cccccc" opacity="1"/>
<path d="M2397.8,197.1 Q2424.8,208.0 2467.0,286.0 Q2428.8,199.0 2402.2,186.9 Z" fill="#cccccc" opacity="1"/>
<path d="M2438.9,188.4 Q2462.6,192.6 2499.0,250.0 Q2464.6,182.9 2441.1,177.6 Z" fill="#cccccc" opacity="1"/>
<path d="M2479.6,180.5 Q2497.7,181.2 2525.0,228.0 Q2498.3,171.3 2480.4,169.5 Z" fill="#cccccc" opacity="1"/>
<path d="M2523.3,172.4 Q2533.7,164.0 2547.0,184.0 Q2527.9,156.0 2516.7,163.6 Z" fill="#cccccc" opacity="1"/>
<path d="M2251.7,192.8 Q2214.8,181.1 2158.0,197.0 Q2211.6,190.4 2248.3,203.2 Z" fill="#cccccc" opacity="1"/>
<path d="M2279.2,199.6 Q2235.2,206.9 2170.0,280.0 Q2236.8,216.6 2280.8,210.4 Z" fill="#cccccc" opacity="1"/>
<path d="M2349.0,214.6 Q2376.5,232.1 2420.0,330.0 Q2381.9,223.9 2355.0,205.4 Z" fill="#cccccc" opacity="1"/>
<path d="M2303.3,424.6 Q2216.5,443.5 2087.0,596.0 Q2217.9,449.7 2304.7,431.4 Z" fill="#d0d0d0" opacity="1"/>
<path d="M2303.0,426.7 Q2226.7,450.4 2113.0,622.0 Q2228.5,456.4 2305.0,433.3 Z" fill="#d0d0d0" opacity="1"/>
<path d="M2303.3,428.9 Q2262.3,451.4 2202.0,618.0 Q2265.3,457.0 2306.7,435.1 Z" fill="#d0d0d0" opacity="1"/>
<path d="M2303.1,432.1 Q2288.2,455.9 2268.0,627.0 Q2293.4,459.3 2308.9,435.9 Z" fill="#d0d0d0" opacity="1"/>
<path d="M2304.9,433.7 Q2316.0,453.1 2335.0,605.0 Q2321.6,450.1 2311.1,430.3 Z" fill="#d0d0d0" opacity="1"/>
<path d="M2309.0,433.4 Q2354.3,446.6 2423.0,573.0 Q2356.1,440.6 2311.0,426.6 Z" fill="#d0d0d0" opacity="1"/>
<path d="M2312.0,431.5 Q2377.6,431.1 2476.0,503.0 Q2377.6,424.9 2312.0,424.5 Z" fill="#d0d0d0" opacity="1"/>
<path d="M2309.5,433.5 Q2351.1,439.7 2414.0,538.0 Q2352.1,433.5 2310.5,426.5 Z" fill="#d0d0d0" opacity="1"/>
<path d="M2300.1,424.5 Q2207.7,423.1 2069.0,494.0 Q2207.5,429.3 2299.9,431.5 Z" fill="#d0d0d0" opacity="1"/>
<path d="M2300.7,422.6 Q2225.8,408.1 2113.0,427.0 Q2224.6,414.3 2299.3,429.4 Z" fill="#d0d0d0" opacity="1"/>
<path d="M2310.4,429.5 Q2338.0,425.9 2379.0,485.0 Q2337.2,419.7 2309.6,422.5 Z" fill="#d0d0d0" opacity="1"/>
<path d="M2289.3,426.6 Q2233.4,437.9 2150.0,560.0 Q2234.6,444.1 2290.7,433.4 Z" fill="#d0d0d0" opacity="1"/>
<path d="M2319.7,428.5 Q2399.7,436.1 2520.0,540.0 Q2400.3,429.9 2320.3,421.5 Z" fill="#d0d0d0" opacity="1"/>
<path d="M1206.5,361.7 Q1199.8,232.7 1188.0,141.0 Q1188.2,233.3 1193.5,362.3 Z" fill="#cacaca" opacity="0.9"/>
<path d="M1221.2,364.0 Q1262.1,232.7 1298.0,146.0 Q1250.9,229.1 1208.8,360.0 Z" fill="#cacaca" opacity="0.9"/>
<path d="M1235.5,365.4 Q1311.0,241.3 1382.0,167.0 Q1301.0,235.2 1224.5,358.6 Z" fill="#cacaca" opacity="0.9"/>
<path d="M1226.1,364.3 Q1262.0,268.5 1293.0,206.0 Q1251.0,264.3 1213.9,359.7 Z" fill="#cacaca" opacity="0.9"/>
<path d="M1218.5,362.4 Q1222.8,278.1 1222.0,218.0 Q1211.2,277.4 1205.5,361.6 Z" fill="#cacaca" opacity="0.9"/>
<path d="M1201.1,359.7 Q1165.5,268.6 1125.0,213.0 Q1154.5,272.8 1188.9,364.3 Z" fill="#cacaca" opacity="0.9"/>
<path d="M1190.0,357.9 Q1105.5,256.0 1017.0,206.0 Q1096.5,263.5 1180.0,366.1 Z" fill="#cacaca" opacity="0.9"/>
<path d="M1184.5,357.3 Q1095.5,274.0 1003.0,239.0 Q1087.5,282.5 1175.5,366.7 Z" fill="#cacaca" opacity="0.9"/>
<path d="M1173.1,356.3 Q1055.8,294.1 936.0,282.0 Q1050.2,304.4 1166.9,367.7 Z" fill="#cacaca" opacity="0.9"/>
<path d="M1244.9,366.3 Q1298.4,303.8 1348.0,268.0 Q1289.6,296.1 1235.1,357.7 Z" fill="#cacaca" opacity="0.9"/>
<path d="M1253.1,367.7 Q1334.3,322.1 1413.0,304.0 Q1328.7,311.8 1246.9,356.3 Z" fill="#cacaca" opacity="0.9"/>
<path d="M1257.5,368.0 Q1350.7,328.8 1442.0,318.0 Q1346.3,318.0 1252.5,356.0 Z" fill="#cacaca" opacity="0.9"/>
<path d="M1161.2,355.6 Q1057.1,335.9 952.0,352.0 Q1054.9,347.4 1158.8,368.4 Z" fill="#cacaca" opacity="0.9"/>
<path d="M1195.2,358.2 Q1139.7,283.6 1080.0,246.0 Q1130.3,290.5 1184.8,365.8 Z" fill="#cacaca" opacity="0.9"/>
<path d="M1211.2,360.0 Q1187.6,287.4 1159.0,242.0 Q1176.4,290.9 1198.8,364.0 Z" fill="#cacaca" opacity="0.9"/>
<path d="M1178.8,356.7 Q1115.9,312.5 1050.0,300.0 Q1109.1,322.0 1171.2,367.3 Z" fill="#cacaca" opacity="0.9"/>
<path d="M1240.6,365.3 Q1282.5,294.1 1320.0,250.0 Q1272.5,288.1 1229.4,358.7 Z" fill="#cacaca" opacity="0.9"/>
<path d="M1636.4,390.9 Q1609.3,241.7 1577.0,141.0 Q1597.7,243.7 1623.6,393.1 Z" fill="#cacaca" opacity="0.9"/>
<path d="M1620.7,388.9 Q1548.1,257.3 1471.0,182.0 Q1537.9,262.9 1609.3,395.1 Z" fill="#cacaca" opacity="0.9"/>
<path d="M1651.4,393.0 Q1673.3,244.1 1690.0,141.0 Q1661.7,242.4 1638.6,391.0 Z" fill="#cacaca" opacity="0.9"/>
<path d="M1665.8,394.9 Q1735.2,253.1 1800.0,165.0 Q1724.8,247.9 1654.2,389.1 Z" fill="#cacaca" opacity="0.9"/>
<path d="M1625.8,389.2 Q1584.8,306.1 1539.0,258.0 Q1574.2,311.2 1614.2,394.8 Z" fill="#cacaca" opacity="0.9"/>
<path d="M1669.5,396.7 Q1736.6,331.1 1800.0,296.0 Q1728.4,322.7 1660.5,387.3 Z" fill="#cacaca" opacity="0.9"/>
<path d="M1665.2,395.9 Q1734.7,300.4 1800.0,245.0 Q1725.3,293.5 1654.8,388.1 Z" fill="#cacaca" opacity="0.9"/>
<path d="M1615.3,388.3 Q1555.8,305.0 1492.0,262.0 Q1546.2,311.7 1604.7,395.7 Z" fill="#cacaca" opacity="0.9"/>
<path d="M1675.3,395.8 Q1774.7,256.7 1870.0,177.0 Q1765.3,249.9 1664.7,388.2 Z" fill="#cacaca" opacity="0.9"/>
<path d="M1676.5,396.7 Q1781.6,293.8 1883.0,241.0 Q1773.4,285.5 1667.5,387.3 Z" fill="#cacaca" opacity="0.9"/>
<path d="M1670.6,395.3 Q1757.6,244.1 1840.0,153.0 Q1747.4,238.2 1659.4,388.7 Z" fill="#cacaca" opacity="0.9"/>
<path d="M1646.3,393.4 Q1679.2,244.2 1707.0,143.0 Q1667.8,241.6 1633.7,390.6 Z" fill="#cacaca" opacity="0.9"/>
<path d="M1636.5,391.8 Q1630.8,256.5 1620.0,160.0 Q1619.2,257.0 1623.5,392.2 Z" fill="#cacaca" opacity="0.9"/>
<path d="M1656.0,394.5 Q1705.4,275.9 1750.0,200.0 Q1694.6,271.4 1644.0,389.5 Z" fill="#cacaca" opacity="0.9"/>
<path d="M1604.1,386.9 Q1523.7,322.9 1440.0,300.0 Q1516.3,332.0 1595.9,397.1 Z" fill="#cacaca" opacity="0.9"/>
<rect x="826" y="333" width="44" height="100" fill="#cbcbcb"/>
<rect x="1084" y="361" width="234" height="180" fill="#cacaca"/>
<rect x="1524" y="391" width="228" height="165" fill="#d1d1d1"/>
<polygon points="664,534 1318,534 1752,551 1860,552 1860,650 664,650" fill="#c9c9c9"/>
<rect x="664" y="650" width="1003" height="32" fill="#d5d5d5"/>
<rect x="664" y="500" width="72" height="150" fill="url(#lsh)"/>
<path d="M664,520 q30,-8 60,-4 M664,548 q35,-5 72,2" fill="none" stroke="#b0b0b0" stroke-width="3"/>
<polygon points="660.0,140.6 933.1,140.6 908.3,155.3 885.7,168.9 858.6,179.0 831.6,185.8 790.9,198.2 761.6,205.0 734.5,209.5 732.2,261.4 714.2,306.6 696.1,347.2 664.5,378.0 660.0,378.0" fill="url(#lfg)"/>
<polygon points="660.0,450.0 694.0,432.0 750.0,396.0 795.4,368.0 831.6,333.6 844.0,290.8 822.5,279.5 761.6,279.5 734.5,293.0 693.9,347.2 664.5,372.0 660.0,374.3" fill="#a9a9a9"/>
<polygon points="698.4,347.2 761.6,284.0 818.0,279.5 781.9,335.9" fill="#cdcdcd"/>
<path d="M675.8,225.3 L671.3,360.7" stroke="#c6c6c6" stroke-width="2.5"/>
<path d="M700.6,220.8 L696.1,281.7" stroke="#c6c6c6" stroke-width="2.5"/>
<path d="M720.9,216.3 L716.4,261.4" stroke="#c6c6c6" stroke-width="2.5"/>
<path d="M741.3,207.2 L736.7,243.4" stroke="#c6c6c6" stroke-width="2.5"/>
<path d="M680.3,333.6 L675.8,351.7" stroke="#c6c6c6" stroke-width="2.5"/>
<path d="M741.3,241.1 L781.9,249.0 M734.5,261.4 L833.8,276.1" stroke="#9c9c9c" stroke-width="1.5"/>
<path d="M736,432 Q736,418 750,415.5 L875,396 L1086,415 Q1102,417 1102,432 L1102,660 Q1102,674 1088,674 L750,674 Q736,674 736,660 Z" fill="#6a6a6a"/>
<path d="M1103,621 Q1160,630 1215,652 M1103,637 Q1170,650 1232,680" fill="none" stroke="#a8a8a8" stroke-width="3"/>
<rect x="1549" y="805" width="120" height="416" fill="url(#flr2)"/>
<polygon points="2425,683 2586,680 2586,1221 2425,1221" fill="url(#flr)"/>
<path d="M664,676 L1202,676 Q1214,677 1214,690 L1214,1221 L664,1221 Z" fill="url(#blk)"/>
<path d="M894.5,677 L894.5,720" stroke="#7a7a7a" stroke-width="1.5"/>
<rect x="1213" y="678" width="21" height="270" fill="url(#gapg)"/>
<path d="M1214,738 L1233,762 M1214,760 L1233,790 M1214,800 L1233,828" stroke="#9a9a9a" stroke-width="2.5"/>
<path d="M1233,692 Q1233,680 1245,680 L1538,680 Q1549,680 1549,692 L1549,1221 L1233,1221 Z" fill="url(#blk)"/>
<rect x="1212" y="945" width="23" height="276" fill="url(#blk)"/>
<path d="M1668,660 Q1668,645 1682,644 L2153,630 L2412,640 Q2425,641 2425,655 L2425,1221 L1668,1221 Z" fill="url(#blkD)"/>
<path d="M1849,637 L1848,621 Q1858,610 1867.7,602 Q1858,590 1851.5,575 Q1848,565 1857,560 Q1870,557 1881,556 Q1888,552 1885,549 Q1875,540 1867.7,530 Q1860,518 1864,507 Q1866,497 1876,497.6 Q1892,500 1902,506 Q1918,514 1929,525 Q1940,538 1944,550 Q1947,562 1948,575 L1953,609 Q1956,625 1956,637 Z" fill="#757575"/>
<path d="M1978,636 Q1990,626 2010,624 Q2028,624 2034,632 Z" fill="#707070"/>
<g fill="none" stroke="#a9d2da" stroke-width="2.2"><circle cx="1626" cy="680" r="6.5"/></g><circle cx="1626" cy="680" r="2" fill="#a9d2da"/><g fill="#a9d2da"><path d="M1626,666 l-2.5,6 h5z M1626,694 l-2.5,-6 h5z M1612,680 l6,-2.5 v5z M1640,680 l-6,-2.5 v5z"/></g>
</svg>
<svg style="left:640px;top:120px;" width="1970" height="1115" viewBox="640 120 1970 1115"><path d="M664,1222 H2587" stroke="#121212" stroke-width="4"/><path d="M664,1222 H2587" stroke="#d8e0de" stroke-width="1.2"/><rect x="658.5" y="135" width="12.5" height="12.5" fill="#a9c6c2"/><rect x="658.5" y="675" width="12.5" height="12.5" fill="#a9c6c2"/><rect x="658.5" y="1215.5" width="12.5" height="12.5" fill="#a9c6c2"/><rect x="1620.5" y="135" width="12.5" height="12.5" fill="#a9c6c2"/><rect x="1620.5" y="1215.5" width="12.5" height="12.5" fill="#a9c6c2"/><rect x="2581.5" y="135" width="12.5" height="12.5" fill="#a9c6c2"/><rect x="2581.5" y="675" width="12.5" height="12.5" fill="#a9c6c2"/><rect x="2581.5" y="1215.5" width="12.5" height="12.5" fill="#a9c6c2"/></svg>
<div class="a" style="left:522px;top:1235px;width:2206px;height:1px;background:#151515;"></div>
<div class="a" style="left:522px;top:1236px;width:2206px;height:35px;background:#202020;"></div>
<svg style="left:522px;top:1236px;" width="860" height="35" viewBox="522 1236 860 35"><rect x="532.5" y="1240.5" width="108" height="25.5" rx="2" fill="#1b1b1b" stroke="#2c2c2c"/><path d="M621,1250 l6,6 l6,-6" fill="none" stroke="#b0b0b0" stroke-width="1.7"/><rect x="651" y="1242" width="1.5" height="22" fill="#333"/><rect x="660.5" y="1240.5" width="136" height="25.5" rx="2" fill="#1b1b1b" stroke="#2c2c2c"/><path d="M777,1250 l6,6 l6,-6" fill="none" stroke="#b0b0b0" stroke-width="1.7"/><rect x="807" y="1242" width="1.5" height="22" fill="#333"/><rect x="816" y="1238.5" width="34" height="28.5" rx="2" fill="#161616"/><path d="M840,1246 v-2 h-18 v16 h10" fill="none" stroke="#b9b9b9" stroke-width="2"/><path d="M834,1246 l-5,7 h4 l-2,6 l6,-8 h-4 l2,-5z" fill="#b9b9b9"/><path d="M836,1258 h8 l-4,4z" fill="#b9b9b9"/><rect x="857.5" y="1245.5" width="21" height="15" fill="none" stroke="#b9b9b9" stroke-width="2"/><rect x="859.0" y="1247.0" width="3.6" height="4" fill="#6a6a6a"/><rect x="859.0" y="1255.0" width="3.6" height="4" fill="#6a6a6a"/><rect x="862.6" y="1251.0" width="3.6" height="4" fill="#6a6a6a"/><rect x="866.2" y="1247.0" width="3.6" height="4" fill="#6a6a6a"/><rect x="866.2" y="1255.0" width="3.6" height="4" fill="#6a6a6a"/><rect x="869.8" y="1251.0" width="3.6" height="4" fill="#6a6a6a"/><rect x="873.4" y="1247.0" width="3.6" height="4" fill="#6a6a6a"/><rect x="873.4" y="1255.0" width="3.6" height="4" fill="#6a6a6a"/><path d="M893,1260 L895,1249 L904,1243 L913,1243 L913,1260 Z" fill="none" stroke="#b9b9b9" stroke-width="2"/><g fill="#b9b9b9"><rect x="891" y="1258" width="4" height="4"/><rect x="893" y="1247" width="4" height="4"/><rect x="902" y="1241" width="4" height="4"/><rect x="911" y="1241" width="4" height="4"/><rect x="911" y="1258" width="4" height="4"/></g><rect x="928" y="1245.5" width="21" height="15" fill="none" stroke="#b9b9b9" stroke-width="2"/><rect x="932" y="1249" width="13" height="8" fill="#b9b9b9"/><path d="M966,1242 v15 M980,1242 v15 M962,1246 h22 M962,1253 h22" fill="none" stroke="#b9b9b9" stroke-width="1.8"/><circle cx="973" cy="1249.5" r="1.6" fill="#b9b9b9"/><path d="M976,1260 h8 l-4,4z" fill="#b9b9b9"/><rect x="999" y="1242" width="1.5" height="22" fill="#333"/><circle cx="1022.5" cy="1247" r="4.6" fill="#d42a2a"/><circle cx="1017.5" cy="1254" r="4.6" fill="#2aa84a"/><circle cx="1027.5" cy="1254" r="4.6" fill="#3b5fd8"/><path d="M1033,1239 v10 M1028,1244 h10" stroke="#c8c8c8" stroke-width="1.6"/><path d="M1028,1261 h8 l-4,4z" fill="#b0b0b0"/><circle cx="1061" cy="1252.5" r="9.5" fill="#b9b9b9"/><circle cx="1061" cy="1252.5" r="4" fill="#202020"/><path d="M1065.0,1252.5 L1068.8,1257.9" stroke="#202020" stroke-width="1.3"/><path d="M1063.0,1256.0 L1060.3,1262.0" stroke="#202020" stroke-width="1.3"/><path d="M1059.0,1256.0 L1052.4,1256.6" stroke="#202020" stroke-width="1.3"/><path d="M1057.0,1252.5 L1053.2,1247.1" stroke="#202020" stroke-width="1.3"/><path d="M1059.0,1249.0 L1061.7,1243.0" stroke="#202020" stroke-width="1.3"/><path d="M1063.0,1249.0 L1069.6,1248.4" stroke="#202020" stroke-width="1.3"/><rect x="1141" y="1242" width="1.5" height="22" fill="#333"/><path d="M1156,1249 h5 l2,-3 h8 l2,3 h5 v12 h-22z" fill="#b9b9b9"/><circle cx="1167" cy="1254.5" r="4" fill="#202020"/><circle cx="1167" cy="1254.5" r="2" fill="#b9b9b9"/><circle cx="1197" cy="1255" r="6" fill="none" stroke="#3a3a3a" stroke-width="2.5"/><circle cx="1206" cy="1248" r="6" fill="none" stroke="#3a3a3a" stroke-width="2.5"/><rect x="1228" y="1242" width="1.5" height="22" fill="#333"/><rect x="1237.5" y="1238.5" width="109" height="28" rx="2" fill="#1c1c1c" stroke="#2e2e2e"/></svg>
<div class="t" style="left:542px;top:1242.96px;font-size:19.3px;color:#b8b8b8;transform:scaleX(0.9026);transform-origin:0 0;">(62.3%)</div>
<div class="t" style="left:672px;top:1242.96px;font-size:19.3px;color:#b8b8b8;transform:scaleX(0.8842);transform-origin:0 0;">Full</div>
<div class="t" style="left:1081.5px;top:1242.46px;font-size:19.3px;color:#3d8fe8;transform:scaleX(0.8792);transform-origin:0 0;">+0.0</div>
<div class="t" style="left:1251px;top:1242.46px;font-size:19.3px;color:#a8a8a8;transform:scaleX(0.8879);transform-origin:0 0;">0:00:00:00</div>
<div class="a" style="left:2728px;top:46px;width:5px;height:1231px;background:#161616;"></div>
<div class="a" style="left:2733px;top:46px;width:344px;height:1225px;background:#222222;"></div>
<div class="a" style="left:2736px;top:90px;width:328px;height:3px;background:#1a1a1a;"></div>
<div class="a" style="left:2736px;top:138px;width:328px;height:3px;background:#1a1a1a;"></div>
<div class="a" style="left:2736px;top:186px;width:328px;height:3px;background:#1a1a1a;"></div>
<div class="a" style="left:2736px;top:444px;width:328px;height:3px;background:#1a1a1a;"></div>
<div class="a" style="left:2736px;top:492px;width:328px;height:3px;background:#1a1a1a;"></div>
<div class="a" style="left:2736px;top:540px;width:328px;height:3px;background:#1a1a1a;"></div>
<div class="a" style="left:2736px;top:588px;width:328px;height:3px;background:#1a1a1a;"></div>
<div class="a" style="left:2736px;top:636px;width:328px;height:3px;background:#1a1a1a;"></div>
<div class="a" style="left:2736px;top:685px;width:328px;height:3px;background:#1a1a1a;"></div>
<div class="a" style="left:2736px;top:733px;width:328px;height:3px;background:#1a1a1a;"></div>
<div class="t" style="left:2755px;top:59.96px;font-size:19.3px;color:#a9a9a9;transform:scaleX(0.9102);transform-origin:0 0;">Info</div>
<div class="t" style="left:2755px;top:108.16px;font-size:19.3px;color:#a9a9a9;transform:scaleX(0.9116);transform-origin:0 0;">Audio</div>
<div class="t" style="left:2755px;top:156.26px;font-size:19.3px;color:#a9a9a9;transform:scaleX(0.9440);transform-origin:0 0;">Preview</div>
<div class="t" style="left:2755px;top:462.06px;font-size:19.3px;color:#a9a9a9;transform:scaleX(0.9483);transform-origin:0 0;">Align</div>
<div class="t" style="left:2755px;top:510.26px;font-size:19.3px;color:#a9a9a9;transform:scaleX(0.9241);transform-origin:0 0;">Libraries</div>
<div class="t" style="left:2755px;top:558.46px;font-size:19.3px;color:#a9a9a9;transform:scaleX(0.9134);transform-origin:0 0;">Character</div>
<div class="t" style="left:2755px;top:606.46px;font-size:19.3px;color:#a9a9a9;transform:scaleX(0.9153);transform-origin:0 0;">Paragraph</div>
<div class="t" style="left:2755px;top:654.46px;font-size:19.3px;color:#a9a9a9;transform:scaleX(0.9181);transform-origin:0 0;">Tracker</div>
<div class="t" style="left:2755px;top:702.46px;font-size:19.3px;color:#a9a9a9;transform:scaleX(0.9406);transform-origin:0 0;">Content-Aware Fill</div>
<div class="t" style="left:2755px;top:204.46px;font-size:19.3px;color:#d2d2d2;transform:scaleX(0.8939);transform-origin:0 0;">Effects &amp; Presets</div>
<div class="a" style="left:2744.5px;top:241px;width:310.5px;height:28px;background:#151515;border-radius:3px;"></div>
<div class="a" style="left:2736px;top:275px;width:328px;height:2px;background:#151515;"></div>
<div class="a" style="left:2736px;top:385.5px;width:328px;height:26px;background:#2e2e2e;"></div>
<div class="a" style="left:2816px;top:387.5px;width:128.5px;height:22px;background:#b9b9b9;"></div>
<div class="a" style="left:2736px;top:303px;width:328px;height:1px;background:#1f1f1f;"></div>
<div class="a" style="left:2736px;top:330px;width:328px;height:1px;background:#1f1f1f;"></div>
<div class="a" style="left:2736px;top:358px;width:328px;height:1px;background:#1f1f1f;"></div>
<div class="a" style="left:2736px;top:384px;width:328px;height:1px;background:#1f1f1f;"></div>
<div class="a" style="left:2736px;top:412px;width:328px;height:2px;background:#131313;"></div>
<div class="a" style="left:3062px;top:412px;width:2px;height:33px;background:#131313;"></div>
<svg style="left:2733px;top:200px;" width="344" height="245" viewBox="2733 200 344 245"><path d="M3034,209.5 h14 M3034,215 h14 M3034,220.5 h14" stroke="#cfcfcf" stroke-width="2"/><circle cx="2766" cy="250.5" r="6" fill="none" stroke="#3a8ee6" stroke-width="2.2"/><path d="M2761.5,255 L2754.5,262" stroke="#3a8ee6" stroke-width="2.5" stroke-linecap="round"/><path d="M2773,258 h8 l-4,4z" fill="#3a8ee6"/><path d="M3038,249 l11,11 M3049,249 l-11,11" stroke="#d6d6d6" stroke-width="2.4"/><path d="M2745,287 l5.5,5.5 l5.5,-5.5" fill="none" stroke="#a5a5a5" stroke-width="1.7"/><path d="M2771,314 l5.5,5.5 l5.5,-5.5" fill="none" stroke="#a5a5a5" stroke-width="1.7"/><path d="M2745,369 l5.5,5.5 l5.5,-5.5" fill="none" stroke="#a5a5a5" stroke-width="1.7"/><path d="M2788,311 h6 l1,2 h16 v14 h-23z" fill="#c4c4c4"/><rect x="2788" y="309" width="8" height="1.5" fill="#c4c4c4"/><rect x="2817" y="334" width="20" height="18" rx="1" fill="#bcbcbc"/><rect x="2820" y="331" width="5" height="4" fill="#bcbcbc"/><rect x="2829" y="331" width="5" height="4" fill="#bcbcbc"/><text x="2821" y="350" font-family="Liberation Serif" font-style="italic" font-size="13" fill="#444">fx</text><rect x="2790" y="392" width="20" height="18" rx="1" fill="#bcbcbc"/><rect x="2793" y="389" width="5" height="4" fill="#bcbcbc"/><rect x="2802" y="389" width="5" height="4" fill="#bcbcbc"/><text x="2791.5" y="408" font-family="Liberation Sans" font-size="12" font-weight="bold" fill="#444">16</text><path d="M3034,418 h18 v18 h-12 v-6 h-6z" fill="#c8c8c8"/><path d="M3034,430 h6 v6" fill="none" stroke="#c8c8c8" stroke-width="1.5"/></svg>
<div class="t" style="left:2789.7px;top:246.46px;font-size:19.3px;color:#d0d0d0;transform:scaleX(0.8811);transform-origin:0 0;">black</div>
<div class="t" style="left:2761.7px;top:281.46px;font-size:19.3px;color:#b0b0b0;">*</div>
<div class="t" style="left:2774.6px;top:280.26px;font-size:19.3px;color:#b0b0b0;transform:scaleX(0.9220);transform-origin:0 0;">Animation Presets</div>
<div class="t" style="left:2821px;top:307.36px;font-size:19.3px;color:#b0b0b0;transform:scaleX(0.9152);transform-origin:0 0;">Transitions - Dissolves</div>
<div class="t" style="left:2848px;top:334.46px;font-size:19.3px;color:#b0b0b0;transform:scaleX(0.9195);transform-origin:0 0;">Fade - dip to black</div>
<div class="t" style="left:2761.7px;top:361.46px;font-size:19.3px;color:#b0b0b0;transform:scaleX(0.9131);transform-origin:0 0;">Color Correction</div>
<div class="t" style="left:2821px;top:389.16px;font-size:19.3px;color:#121212;transform:scaleX(0.9240);transform-origin:0 0;">Black &amp; White</div>
<div class="a" style="left:0px;top:1271px;width:3077px;height:6px;background:#121212;"></div>
<div class="a" style="left:0px;top:1277px;width:3077px;height:285px;background:#1c1c1c;"></div>
<div class="t" style="left:47.5px;top:1292.06px;font-size:19.3px;color:#8e8e8e;transform:scaleX(0.8759);transform-origin:0 0;">Render Queue</div>
<div class="t" style="left:285px;top:1292.06px;font-size:19.3px;color:#d4d4d4;transform:scaleX(0.9011);transform-origin:0 0;">NewLevelSequence</div>
<div class="a" style="left:225px;top:1316.5px;width:248px;height:3px;background:#d8d8d8;"></div>
<svg style="left:0px;top:1277px;" width="1451" height="200" viewBox="0 1277 1451 200"><path d="M226,1297 l8,8 M234,1297 l-8,8" stroke="#a0a0a0" stroke-width="1.6"/><rect x="249.5" y="1291" width="15.5" height="15.5" fill="#b4a078"/><path d="M459,1295 h14 M459,1300.5 h14 M459,1306 h14" stroke="#cfcfcf" stroke-width="2"/><rect x="174.5" y="1335.5" width="1006" height="29" rx="3" fill="#141414" stroke="#262626"/><circle cx="197" cy="1346" r="6" fill="none" stroke="#bcbcbc" stroke-width="2"/><path d="M192.5,1350.5 L185.5,1357.5" stroke="#bcbcbc" stroke-width="2.3" stroke-linecap="round"/><path d="M203,1353 h8 l-4,4z" fill="#bcbcbc"/><path d="M1206,1342 h10 M1216,1342 v12 h8 M1216,1348 h8" fill="none" stroke="#b9b9b9" stroke-width="2"/><rect x="1222" y="1339" width="8" height="6" fill="#b9b9b9"/><rect x="1222" y="1345" width="8" height="6" fill="#b9b9b9"/><rect x="1222" y="1351" width="8" height="6" fill="#b9b9b9"/><path d="M1226,1359 h7 l-3.5,4z" fill="#b9b9b9"/><path d="M1261,1352 q12,-16 24,0z" fill="#b9b9b9"/><rect x="1272" y="1339" width="2.5" height="14" fill="#b9b9b9"/><rect x="1260" y="1354" width="26" height="7" fill="#b9b9b9"/><rect x="1270" y="1346" width="6" height="2" fill="#1c1c1c"/><rect x="1303" y="1343" width="17" height="18" fill="none" stroke="#b9b9b9" stroke-width="2"/><rect x="1308" y="1338" width="18" height="18" fill="#1c1c1c" stroke="#b9b9b9" stroke-width="2"/><path d="M1312,1338 v18 M1322,1338 v18" stroke="#b9b9b9" stroke-width="1.5" stroke-dasharray="2 2"/><rect x="1313" y="1345" width="8" height="3" fill="#b9b9b9"/><circle cx="1353" cy="1354" r="7.5" fill="none" stroke="#b9b9b9" stroke-width="2"/><circle cx="1357" cy="1350" r="7.5" fill="#1c1c1c" stroke="#b9b9b9" stroke-width="2"/><circle cx="1361" cy="1346" r="7.5" fill="#b9b9b9"/><rect x="1399" y="1340" width="25" height="21" fill="none" stroke="#b9b9b9" stroke-width="2" stroke-dasharray="25 2"/><path d="M1403,1346 q6,0 9,6 q3,5 9,5" fill="none" stroke="#b9b9b9" stroke-width="2"/><path d="M1404,1336 v5 M1419,1336 v5" stroke="#b9b9b9" stroke-width="1.5"/><rect x="3" y="1378.5" width="1448" height="3" fill="#0f0f0f"/><rect x="3" y="1381.5" width="1447" height="27.5" fill="#252525"/><rect x="3" y="1409" width="1447" height="2" fill="#121212"/><path d="M12.5,1396 q8,-9 16.5,0 q-8,9 -16.5,0z" fill="#c0c0c0"/><circle cx="20.7" cy="1396" r="2.6" fill="#252525"/><path d="M35,1392 h4 l7,-6 v20 l-7,-6 h-4z" fill="#b0b0b0"/><path d="M47,1390 q5,6 0,12 M49.5,1387 q8,9 0,18" fill="none" stroke="#b0b0b0" stroke-width="1.8"/><circle cx="68" cy="1396" r="5.6" fill="#b0b0b0"/><path d="M88,1392 v-3 a4.3,4.3 0 0 1 8.6,0 v3" fill="none" stroke="#b0b0b0" stroke-width="2.2"/><rect x="85" y="1392" width="14.5" height="11" rx="1" fill="#b0b0b0"/><rect x="91" y="1395" width="2.4" height="5" fill="#252525"/><rect x="111.5" y="1387" width="2" height="18" fill="#111"/><rect x="162.5" y="1387" width="2" height="18" fill="#111"/><rect x="216" y="1387" width="2" height="18" fill="#111"/><path d="M134,1389 v7 l11,11 l8,-8 l-11,-11 h-8z" fill="#b0b0b0"/><circle cx="138" cy="1391.5" r="1.6" fill="#252525"/><path d="M173,1393 l3.5,-3 l3.5,3 M173,1398 h7" fill="none" stroke="#9a9a9a" stroke-width="1.3"/><rect x="197" y="1398" width="2" height="2.5" fill="#9a9a9a"/><rect x="970" y="1387" width="2" height="18" fill="#111"/><rect x="1236.6" y="1387" width="2" height="18" fill="#111"/><rect x="1425" y="1387" width="2" height="18" fill="#111"/><rect x="3" y="1411" width="1447" height="25.5" fill="#313131"/><rect x="3" y="1436.5" width="1447" height="1.5" fill="#1e1e1e"/><rect x="3" y="1438" width="1447" height="24" fill="#242424"/><rect x="10" y="1412" width="21" height="23.5" fill="#252525"/><rect x="57.5" y="1412" width="21.5" height="23.5" fill="#252525"/><rect x="81.5" y="1412" width="21.5" height="23.5" fill="#252525"/><path d="M12.5,1423.75 q8,-9 16.5,0 q-8,9 -16.5,0z" fill="#c0c0c0"/><circle cx="20.7" cy="1423.75" r="2.6" fill="#252525"/><path d="M122,1418.75 l5,5 l-5,5" fill="none" stroke="#a5a5a5" stroke-width="1.6"/><rect x="139.7" y="1414.5" width="19.3" height="19" fill="#98b9b3"/><rect x="227" y="1413" width="17" height="14" fill="none" stroke="#b8b8b8" stroke-width="1.5"/><rect x="223" y="1416" width="17" height="14" fill="#313131" stroke="#b8b8b8" stroke-width="1.5"/><rect x="219" y="1419.5" width="18" height="15" fill="#313131" stroke="#b8b8b8" stroke-width="1.6"/><path d="M220,1434 l5,-5 l4,3 l3,-4 l4,6z" fill="#3a8ee6"/><circle cx="232" cy="1424" r="1.6" fill="#e8e8e8"/><rect x="975.5" y="1412" width="111" height="23.5" fill="#1b1b1b"/><path d="M1067,1420.75 l6,6 l6,-6" fill="none" stroke="#b0b0b0" stroke-width="1.6"/><rect x="1095" y="1412" width="20.5" height="23.5" fill="#232323"/><polyline points="1256.8,1415.2 1257.8,1415.7 1258.7,1416.2 1259.6,1416.8 1260.3,1417.5 1261.0,1418.3 1261.5,1419.2 1262.0,1420.1 1262.3,1421.1 1262.5,1422.0 1262.6,1423.0 1262.6,1424.0 1262.4,1425.0 1262.1,1425.9 1261.8,1426.8 1261.3,1427.7 1260.7,1428.4 1260.0,1429.1 1259.3,1429.7 1258.5,1430.2 1257.7,1430.5 1256.8,1430.8 1255.9,1431.0 1255.0,1431.0 1254.1,1431.0 1253.3,1430.8 1252.4,1430.5 1251.6,1430.2 1250.9,1429.7 1250.3,1429.2 1249.7,1428.6 1249.2,1427.9 1248.8,1427.2 1248.4,1426.4 1248.2,1425.7 1248.1,1424.9 1248.1,1424.1 1248.2,1423.3 1248.3,1422.5 1248.6,1421.8 1248.9,1421.1 1249.3,1420.5 1249.8,1420.0 1250.4,1419.5 1250.9,1419.0 1251.6,1418.7 1252.2,1418.4 1252.9,1418.3 1253.6,1418.2 1254.3,1418.2 1255.0,1418.3 1255.6,1418.4 1256.2,1418.7 1256.8,1419.0 1257.4,1419.4 1257.8,1419.8 1258.2,1420.3 1258.6,1420.8 1258.9,1421.3 1259.1,1421.9 1259.2,1422.5 1259.2,1423.1 1259.2,1423.7 1259.1,1424.2 1259.0,1424.8 1258.7,1425.3 1258.5,1425.8 1258.1,1426.2 1257.8,1426.6 1257.3,1426.9 1256.9,1427.2 1256.4,1427.4 1256.0,1427.5 1255.5,1427.6 1255.0,1427.6 1254.5,1427.6 1254.0,1427.5 1253.6,1427.4 1253.2,1427.2 1252.8,1426.9 1252.5,1426.6 1252.2,1426.3 1251.9,1426.0 1251.7,1425.6 1251.6,1425.2 1251.5,1424.8" fill="none" stroke="#b0b0b0" stroke-width="1.8"/><rect x="1274.5" y="1412" width="142.5" height="23.5" fill="#1b1b1b"/><path d="M1398,1420.75 l6,6 l6,-6" fill="none" stroke="#b0b0b0" stroke-width="1.6"/><rect x="10" y="1439" width="21" height="22" fill="#1c1c1c"/><rect x="57.5" y="1439" width="21.5" height="22" fill="#1c1c1c"/><rect x="81.5" y="1439" width="21.5" height="22" fill="#1c1c1c"/><path d="M12.5,1450.0 q8,-9 16.5,0 q-8,9 -16.5,0z" fill="#c0c0c0"/><circle cx="20.7" cy="1450.0" r="2.6" fill="#1c1c1c"/><path d="M122,1445.0 l5,5 l-5,5" fill="none" stroke="#a5a5a5" stroke-width="1.6"/><rect x="139.7" y="1441.5" width="19.3" height="19" fill="#98b9b3"/><rect x="227" y="1440" width="17" height="14" fill="none" stroke="#b8b8b8" stroke-width="1.5"/><rect x="223" y="1443" width="17" height="14" fill="#242424" stroke="#b8b8b8" stroke-width="1.5"/><rect x="219" y="1446.5" width="18" height="15" fill="#242424" stroke="#b8b8b8" stroke-width="1.6"/><path d="M220,1461 l5,-5 l4,3 l3,-4 l4,6z" fill="#3a8ee6"/><circle cx="232" cy="1451" r="1.6" fill="#e8e8e8"/><rect x="975.5" y="1439" width="111" height="22" fill="#1b1b1b"/><path d="M1067,1447.0 l6,6 l6,-6" fill="none" stroke="#b0b0b0" stroke-width="1.6"/><rect x="1095" y="1439" width="20.5" height="22" fill="#232323"/><polyline points="1256.8,1441.5 1257.8,1441.9 1258.7,1442.4 1259.6,1443.0 1260.3,1443.8 1261.0,1444.6 1261.5,1445.4 1262.0,1446.3 1262.3,1447.3 1262.5,1448.3 1262.6,1449.3 1262.6,1450.3 1262.4,1451.3 1262.1,1452.2 1261.8,1453.1 1261.3,1453.9 1260.7,1454.7 1260.0,1455.3 1259.3,1455.9 1258.5,1456.4 1257.7,1456.8 1256.8,1457.1 1255.9,1457.2 1255.0,1457.3 1254.1,1457.2 1253.3,1457.0 1252.4,1456.8 1251.6,1456.4 1250.9,1456.0 1250.3,1455.4 1249.7,1454.8 1249.2,1454.2 1248.8,1453.4 1248.4,1452.7 1248.2,1451.9 1248.1,1451.1 1248.1,1450.3 1248.2,1449.6 1248.3,1448.8 1248.6,1448.1 1248.9,1447.4 1249.3,1446.8 1249.8,1446.2 1250.4,1445.7 1250.9,1445.3 1251.6,1444.9 1252.2,1444.7 1252.9,1444.5 1253.6,1444.4 1254.3,1444.4 1255.0,1444.5 1255.6,1444.7 1256.2,1444.9 1256.8,1445.2 1257.4,1445.6 1257.8,1446.0 1258.2,1446.5 1258.6,1447.0 1258.9,1447.6 1259.1,1448.2 1259.2,1448.7 1259.2,1449.3 1259.2,1449.9 1259.1,1450.5 1259.0,1451.0 1258.7,1451.5 1258.5,1452.0 1258.1,1452.5 1257.8,1452.8 1257.3,1453.2 1256.9,1453.4 1256.4,1453.6 1256.0,1453.8 1255.5,1453.9 1255.0,1453.9 1254.5,1453.9 1254.0,1453.8 1253.6,1453.6 1253.2,1453.4 1252.8,1453.2 1252.5,1452.9 1252.2,1452.6 1251.9,1452.2 1251.7,1451.9 1251.6,1451.5 1251.5,1451.1" fill="none" stroke="#b0b0b0" stroke-width="1.8"/><rect x="1274.5" y="1439" width="142.5" height="22" fill="#1b1b1b"/><path d="M1398,1447.0 l6,6 l6,-6" fill="none" stroke="#b0b0b0" stroke-width="1.6"/><rect x="1125.5" y="1439" width="104" height="22" fill="#1b1b1b"/><path d="M1210,1447 l6,6 l6,-6" fill="none" stroke="#b0b0b0" stroke-width="1.6"/><rect x="247" y="1412.5" width="721" height="23" fill="#313131" stroke="#8e8e8e" stroke-width="2"/></svg>
<div class="t" style="left:225.5px;top:1389.26px;font-size:16px;color:#9a9a9a;transform:scaleX(0.9007);transform-origin:0 0;">Layer Name</div>
<div class="t" style="left:979.5px;top:1388.86px;font-size:16px;color:#9a9a9a;transform:scaleX(0.8869);transform-origin:0 0;">Mode</div>
<div class="t" style="left:1100.6px;top:1388.86px;font-size:16px;color:#9a9a9a;transform:scaleX(0.8901);transform-origin:0 0;">T</div>
<div class="t" style="left:1124px;top:1388.86px;font-size:16px;color:#9a9a9a;transform:scaleX(0.9510);transform-origin:0 0;">.TrkMat</div>
<div class="t" style="left:1246.6px;top:1388.86px;font-size:16px;color:#9a9a9a;transform:scaleX(0.8891);transform-origin:0 0;">Parent &amp; Link</div>
<div class="t" style="left:174.7px;top:1413.06px;font-size:19.3px;color:#b8b8b8;">1</div>
<div class="t" style="left:174.7px;top:1440.46px;font-size:19.3px;color:#b8b8b8;">2</div>
<div class="t" style="left:251.5px;top:1415.46px;font-size:19.3px;color:#c4c4c4;transform:scaleX(0.9320);transform-origin:0 0;">z-depth</div>
<div class="t" style="left:252.7px;top:1440.96px;font-size:19.3px;color:#c4c4c4;transform:scaleX(0.9422);transform-origin:0 0;">[NewLevelSequence.[0000-0149].exr]</div>
<div class="t" style="left:987px;top:1414.96px;font-size:19.3px;color:#c0c0c0;transform:scaleX(0.9485);transform-origin:0 0;">Normal</div>
<div class="t" style="left:1286px;top:1414.96px;font-size:19.3px;color:#c0c0c0;transform:scaleX(0.8886);transform-origin:0 0;">None</div>
<div class="t" style="left:987px;top:1441.96px;font-size:19.3px;color:#c0c0c0;transform:scaleX(0.9485);transform-origin:0 0;">Normal</div>
<div class="t" style="left:1286px;top:1441.96px;font-size:19.3px;color:#c0c0c0;transform:scaleX(0.8886);transform-origin:0 0;">None</div>
<div class="t" style="left:1137px;top:1441.96px;font-size:19.3px;color:#c0c0c0;transform:scaleX(0.8886);transform-origin:0 0;">None</div>
<div class="t" style="left:27px;top:1330.05px;font-size:22.5px;color:#3d8fe8;font-weight:bold;transform:scaleX(1.0811);transform-origin:0 0;">0:00:00:00</div>
<div class="t" style="left:19px;top:1357.33px;font-size:16.5px;color:#2c5a94;transform:scaleX(1.0128);transform-origin:0 0;">00000 (30.00 fps)</div>
<div class="a" style="left:1450px;top:1330px;width:1627px;height:232px;background:#232323;"></div>
<div class="a" style="left:1450px;top:1277px;width:1627px;height:53px;background:#1c1c1c;"></div>
<div class="a" style="left:1450px;top:1330px;width:2px;height:232px;background:#111111;"></div>
<svg style="left:1450px;top:1277px;" width="1627" height="285" viewBox="1450 1277 1627 285"><rect x="1452" y="1330.5" width="1625" height="2.2" fill="#0f0f0f"/><rect x="1462" y="1332.7" width="1581" height="12.3" fill="#5c5c5c"/><path d="M1462,1332.7 h-4 a6.2,6.2 0 0 0 0,12.3 h4z" fill="#3a8ee6"/><path d="M3043,1332.7 h4 a6.2,6.2 0 0 1 0,12.3 h-4z" fill="#3a8ee6"/><rect x="1452" y="1345" width="1625" height="2" fill="#0f0f0f"/><rect x="1452" y="1347" width="1603" height="30" fill="#1f1f1f"/><rect x="1452" y="1377" width="1625" height="3" fill="#0f0f0f"/><rect x="1462" y="1380" width="1581" height="22.7" fill="#555555"/><path d="M1462,1380 h-3 a6,6 0 0 0 -6,6 v10.7 a6,6 0 0 0 6,6 h3z" fill="#3a8ee6"/><path d="M3043,1380 h3 a6,6 0 0 1 6,6 v10.7 a6,6 0 0 1 -6,6 h-3z" fill="#3a8ee6"/><rect x="1452" y="1402.7" width="1625" height="8.3" fill="#111"/><rect x="1463" y="1405.7" width="11" height="3.3" fill="#2fb536"/><rect x="1462.1" y="1370" width="1.3" height="7" fill="#8a8a8a"/><rect x="1567.7" y="1370" width="1.3" height="7" fill="#8a8a8a"/><rect x="1673.3" y="1370" width="1.3" height="7" fill="#8a8a8a"/><rect x="1778.9" y="1370" width="1.3" height="7" fill="#8a8a8a"/><rect x="1884.5" y="1370" width="1.3" height="7" fill="#8a8a8a"/><rect x="1990.1" y="1370" width="1.3" height="7" fill="#8a8a8a"/><rect x="2095.7" y="1370" width="1.3" height="7" fill="#8a8a8a"/><rect x="2201.3" y="1370" width="1.3" height="7" fill="#8a8a8a"/><rect x="2306.9" y="1370" width="1.3" height="7" fill="#8a8a8a"/><rect x="2412.5" y="1370" width="1.3" height="7" fill="#8a8a8a"/><rect x="2518.1" y="1370" width="1.3" height="7" fill="#8a8a8a"/><rect x="2623.7" y="1370" width="1.3" height="7" fill="#8a8a8a"/><rect x="2729.3" y="1370" width="1.3" height="7" fill="#8a8a8a"/><rect x="2834.9" y="1370" width="1.3" height="7" fill="#8a8a8a"/><rect x="2940.5" y="1370" width="1.3" height="7" fill="#8a8a8a"/><rect x="3046.1" y="1370" width="1.3" height="7" fill="#8a8a8a"/></svg>
<div class="t" style="left:1444.88463359375px;top:1350.03px;font-size:17.8px;color:#a8a8a8;transform:scaleX(0.9000);transform-origin:0 0;">0:00f</div>
<div class="t" style="left:1557.1648484375px;top:1350.03px;font-size:17.8px;color:#a8a8a8;transform:scaleX(0.9000);transform-origin:0 0;">10f</div>
<div class="t" style="left:1662.7648484375002px;top:1350.03px;font-size:17.8px;color:#a8a8a8;transform:scaleX(0.9000);transform-origin:0 0;">20f</div>
<div class="t" style="left:1757.229696875px;top:1350.03px;font-size:17.8px;color:#a8a8a8;transform:scaleX(0.9000);transform-origin:0 0;">01:00f</div>
<div class="t" style="left:1873.9648484375002px;top:1350.03px;font-size:17.8px;color:#a8a8a8;transform:scaleX(0.9000);transform-origin:0 0;">10f</div>
<div class="t" style="left:1979.5648484375001px;top:1350.03px;font-size:17.8px;color:#a8a8a8;transform:scaleX(0.9000);transform-origin:0 0;">20f</div>
<div class="t" style="left:2074.0296968750004px;top:1350.03px;font-size:17.8px;color:#a8a8a8;transform:scaleX(0.9000);transform-origin:0 0;">02:00f</div>
<div class="t" style="left:2190.7648484375px;top:1350.03px;font-size:17.8px;color:#a8a8a8;transform:scaleX(0.9000);transform-origin:0 0;">10f</div>
<div class="t" style="left:2296.3648484375px;top:1350.03px;font-size:17.8px;color:#a8a8a8;transform:scaleX(0.9000);transform-origin:0 0;">20f</div>
<div class="t" style="left:2390.8296968750005px;top:1350.03px;font-size:17.8px;color:#a8a8a8;transform:scaleX(0.9000);transform-origin:0 0;">03:00f</div>
<div class="t" style="left:2507.5648484374997px;top:1350.03px;font-size:17.8px;color:#a8a8a8;transform:scaleX(0.9000);transform-origin:0 0;">10f</div>
<div class="t" style="left:2613.1648484375px;top:1350.03px;font-size:17.8px;color:#a8a8a8;transform:scaleX(0.9000);transform-origin:0 0;">20f</div>
<div class="t" style="left:2707.6296968750003px;top:1350.03px;font-size:17.8px;color:#a8a8a8;transform:scaleX(0.9000);transform-origin:0 0;">04:00f</div>
<div class="t" style="left:2824.3648484375px;top:1350.03px;font-size:17.8px;color:#a8a8a8;transform:scaleX(0.9000);transform-origin:0 0;">10f</div>
<div class="t" style="left:2929.9648484375px;top:1350.03px;font-size:17.8px;color:#a8a8a8;transform:scaleX(0.9000);transform-origin:0 0;">20f</div>
<div class="t" style="left:3024.429696875px;top:1350.03px;font-size:17.8px;color:#a8a8a8;transform:scaleX(0.9000);transform-origin:0 0;">05:00f</div>
<div class="a" style="left:3054px;top:1347px;width:23px;height:30px;background:#232323;"></div>
<div class="a" style="left:1428px;top:1347px;width:22px;height:30px;background:#1c1c1c;"></div>
<div class="a" style="left:1450px;top:1347px;width:2px;height:30px;background:#111111;"></div>
<svg style="left:1450px;top:1330px;" width="1627" height="232" viewBox="1450 1330 1627 232"><rect x="1452" y="1411" width="11" height="25.5" fill="#3a3a3a"/><rect x="1452" y="1438.5" width="11" height="25.2" fill="#2b2b2b"/><rect x="1463" y="1411" width="1580" height="25.5" fill="#789893"/><rect x="1463" y="1411" width="1580" height="2" fill="#cdd8d5"/><rect x="1463" y="1438.5" width="1580" height="25.2" fill="#5e6c6a"/><rect x="3043" y="1411" width="11" height="52.7" fill="#2a2a2a"/><path d="M1464,1413 h8 q-6,2 -7,9z M1464,1440 h8 q-6,2 -7,9z" fill="#111"/><path d="M3043,1413 h-8 q6,2 7,9z M3043,1440 h-8 q6,2 7,9z" fill="#111"/><path d="M3062,1383 h15 v20 h-6 l-9,-7z" fill="#c0c0c0"/><path d="M3066,1424 l6,-8 l5,4" fill="none" stroke="#b0b0b0" stroke-width="1.8"/><circle cx="3071" cy="1428" r="4" fill="none" stroke="#b0b0b0" stroke-width="1.8"/><rect x="1462.5" y="1333" width="2" height="228" fill="#3a8ee6"/><path d="M1453.5,1355 q0,-5 5,-5 h10 q5,0 5,5 v6 l-10,12 l-10,-12z" fill="#3a8ee6"/><rect x="1460" y="1364" width="1.6" height="1.6" fill="#1a1a1a"/><rect x="1465" y="1364" width="1.6" height="1.6" fill="#1a1a1a"/></svg>
<div class="a" style="left:0px;top:1561px;width:3077px;height:27px;background:#1d1d1d;"></div>
<div class="a" style="left:0px;top:1561px;width:3077px;height:1px;background:#111;"></div>
<svg style="left:0px;top:1561px;" width="1700" height="27" viewBox="0 1561 1700 27"><rect x="15" y="1568" width="12" height="12" fill="none" stroke="#b0b0b0" stroke-width="1.6"/><rect x="20" y="1573" width="12" height="12" fill="#1d1d1d" stroke="#b0b0b0" stroke-width="1.6"/><rect x="24" y="1577" width="4" height="4" fill="#b0b0b0"/><rect x="40" y="1564" width="25" height="24" fill="#141414"/><circle cx="50" cy="1574" r="6" fill="none" stroke="#3a8ee6" stroke-width="1.8"/><rect x="52" y="1576" width="10" height="9" fill="#141414" stroke="#3a8ee6" stroke-width="1.8"/><path d="M80,1567 v20 M88,1567 v20" stroke="#b0b0b0" stroke-width="2"/><path d="M76,1577 l6,-6 v12z M92,1577 l-6,-6 v12z" fill="#b0b0b0"/><circle cx="112" cy="1573" r="5" fill="#b0b0b0"/><path d="M105,1586 q7,-12 14,0z" fill="#b0b0b0"/><path d="M120,1570 h5 l-3,12" fill="none" stroke="#b0b0b0" stroke-width="1.5"/><rect x="973" y="1562" width="262" height="26" fill="#1a1a1a" stroke="#262626"/><path d="M1461,1578 l6,-5 l2,2 l3,-3 l4,6z" fill="#b0b0b0"/><circle cx="1501.5" cy="1577.5" r="6" fill="none" stroke="#b0b0b0" stroke-width="2.2"/><rect x="1508" y="1576" width="63" height="2" fill="#3a3a3a"/><path d="M1589,1582 l6,-6 l3,2 l7,-7 l11,11z" fill="#b0b0b0"/></svg>
<div class="t" style="left:142px;top:1567.46px;font-size:19.3px;color:#9a9a9a;transform:scaleX(0.9097);transform-origin:0 0;">Frame Render Time:</div>
<div class="t" style="left:312px;top:1567.46px;font-size:19.3px;color:#d9a035;transform:scaleX(0.9149);transform-origin:0 0;">450ms</div>
<div class="t" style="left:1005px;top:1567.46px;font-size:19.3px;color:#9a9a9a;transform:scaleX(0.9181);transform-origin:0 0;">Toggle Switches / Modes</div>
</body></html>
